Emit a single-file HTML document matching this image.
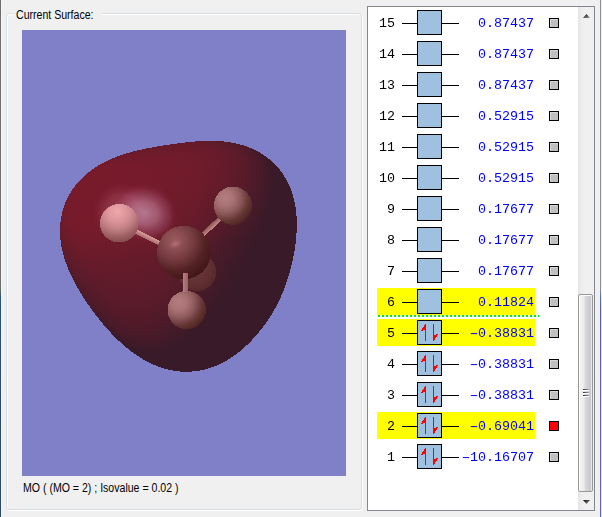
<!DOCTYPE html>
<html><head><meta charset="utf-8"><title>MO Editor</title>
<style>
html,body{margin:0;padding:0}
body{width:602px;height:517px;background:#f0f0f0;position:relative;overflow:hidden;font-family:"Liberation Sans",sans-serif;color:#000}
div,svg,span{position:absolute;box-sizing:border-box}
.edgeL{left:0;top:0;width:1px;height:517px;background:linear-gradient(#6e6e6e 0,#6e6e6e 55%,#607068 56%,#2e5070 57.5%,#2a4a62 100%)}
.edgeL2{left:1px;top:0;width:1px;height:517px;background:#f6f5f3}
.edgeR{left:600px;top:0;width:1px;height:517px;background:linear-gradient(#8c9096 0,#8c9096 56%,#507898 57.5%,#5c5cac 60%,#6666b4 100%)}
.edgeR2{left:601px;top:0;width:1px;height:517px;background:linear-gradient(#f0f0f0 0,#f0f0f0 56%,#d0f4fc 57.5%,#dcdcf8 61%,#e0e0f8 100%)}
.grp{left:6px;top:13px;width:356px;height:497px;border:1px solid #d5dfe5;border-radius:3px;box-shadow:inset 1px 1px 0 #fff,1px 1px 0 #fff}
.grpt{left:14px;top:5px;height:16px;width:88px;background:#f0f0f0}
.t{white-space:pre;font-size:12px;line-height:14px;transform-origin:0 0;transform:scaleX(.88)}
.view{left:22px;top:30px;width:324px;height:446px;background:#8080c8}
.list{left:367px;top:6px;width:228px;height:505px;border:1px solid #828790;background:#fff}
.rows{left:0;top:0;width:602px;height:517px;will-change:transform;font-family:"Liberation Mono",monospace;font-size:13.333px;line-height:16px}
.hl{left:377px;width:158px;height:27px;background:#ff0}
.num{left:371px;width:24px;text-align:right;height:16px}
.ln{left:402px;width:57px;height:1px;background:#000}
.bx{left:417px;width:25px;height:25px;border:1px solid #000;background:#a0c0e0}
.bx svg{left:0;top:0}
.en{left:454px;width:80px;text-align:right;height:16px;color:#00f;white-space:pre}
.m{position:static;display:inline-block;transform:scaleX(1.75)}
.sq{left:549px;width:10px;height:10px;border:1px solid #000;background:#c0c0c0;box-shadow:inset 1px 1px 0 #d8d8d8}
.sq.r{background:#f00;box-shadow:none}
.dots{left:378px;top:315px;width:161px;height:2px;background:repeating-linear-gradient(90deg,#00f000 0,#00f000 2px,#fff 2px,#fff 4px)}
.sb{left:578px;top:7px;width:16px;height:503px;background:linear-gradient(90deg,#e3e3e3 0,#ededed 3px,#f0f0f0 8px,#f0f0f0 100%)}
.thumb{left:578px;top:294px;width:15px;height:198px;border:1px solid #979797;border-radius:2px;background:linear-gradient(90deg,#f4f4f4 0,#ececec 5px,#dadadc 6px,#c8c8ce 11.6px,#ececec 12px,#ececec 100%);box-shadow:inset 1px 1px 0 #fff}
.grip{left:583px;width:6px;height:2px;background:linear-gradient(90deg,#303030,#a0a0a0);border-bottom:1px solid #fff}
</style></head><body>
<div class="edgeL"></div><div class="edgeL2"></div><div class="edgeR"></div><div class="edgeR2"></div>
<div class="grp"></div>
<div class="grpt"></div>
<div class="t" style="left:15.500px;top:8px">Current Surface:</div>
<div class="view">
<svg width="324" height="446" viewBox="22 30 324 446">
<defs>
<radialGradient id="spec" gradientUnits="userSpaceOnUse" cx="0" cy="0" r="1" gradientTransform="translate(145 213) rotate(20) scale(33 29)">
<stop offset="0" stop-color="#dcb0cc" stop-opacity=".6"/><stop offset=".4" stop-color="#d094b0" stop-opacity=".5"/><stop offset=".75" stop-color="#b86488" stop-opacity=".25"/><stop offset="1" stop-color="#902848" stop-opacity="0"/>
</radialGradient>
<radialGradient id="halo" gradientUnits="userSpaceOnUse" cx="122" cy="212" r="30"><stop offset="0" stop-color="#d08098" stop-opacity=".4"/><stop offset=".6" stop-color="#c06080" stop-opacity=".25"/><stop offset="1" stop-color="#902848" stop-opacity="0"/></radialGradient>
<radialGradient id="chl" gradientUnits="userSpaceOnUse" cx="0" cy="0" r="1" gradientTransform="translate(175.500 244) rotate(-20) scale(8 4.500)"><stop offset="0" stop-color="#c07a80" stop-opacity=".8"/><stop offset="1" stop-color="#a06066" stop-opacity="0"/></radialGradient>
<radialGradient id="h1" cx=".45" cy=".2" r=".85"><stop offset="0" stop-color="#f0aaae"/><stop offset=".3" stop-color="#dc969b"/><stop offset=".55" stop-color="#c07f84"/><stop offset=".8" stop-color="#9a5c5e"/><stop offset="1" stop-color="#7e4848"/></radialGradient>
<radialGradient id="h2" cx=".3" cy=".3" r=".8"><stop offset="0" stop-color="#b47e81"/><stop offset=".25" stop-color="#aa7477"/><stop offset=".5" stop-color="#8e5a5c"/><stop offset=".75" stop-color="#643634"/><stop offset="1" stop-color="#4a2220"/></radialGradient>
<radialGradient id="cc" cx=".33" cy=".28" r=".8"><stop offset="0" stop-color="#9a5a5f"/><stop offset=".2" stop-color="#8c4e52"/><stop offset=".45" stop-color="#743a3e"/><stop offset=".7" stop-color="#542224"/><stop offset="1" stop-color="#3e1416"/></radialGradient>
<radialGradient id="h4" cx=".4" cy=".4" r=".8"><stop offset="0" stop-color="#6c3a3c"/><stop offset=".6" stop-color="#5e2e30"/><stop offset="1" stop-color="#4c2226"/></radialGradient>
<linearGradient id="b1" gradientUnits="userSpaceOnUse" x1="0" y1="-2.3" x2="0" y2="2.3"><stop offset="0" stop-color="#dc9c9c"/><stop offset="1" stop-color="#a86c6c"/></linearGradient>
<linearGradient id="b2" gradientUnits="userSpaceOnUse" x1="0" y1="-2.3" x2="0" y2="2.3"><stop offset="0" stop-color="#c88888"/><stop offset="1" stop-color="#8a5454"/></linearGradient>
<linearGradient id="b3v" gradientUnits="userSpaceOnUse" x1="183" y1="0" x2="188" y2="0"><stop offset="0" stop-color="#b88084"/><stop offset="1" stop-color="#986064"/></linearGradient>
<linearGradient id="b3" gradientUnits="userSpaceOnUse" x1="0" y1="-2.3" x2="0" y2="2.3"><stop offset="0" stop-color="#985e60"/><stop offset="1" stop-color="#b47c7e"/></linearGradient>
</defs>
<defs>
<linearGradient id="g0" gradientUnits="userSpaceOnUse" x1="184" y1="0" x2="232" y2="0"><stop offset="0" stop-color="#611b2a"/><stop offset="0.0208" stop-color="#6c1b2a"/><stop offset="0.0833" stop-color="#651b2a"/><stop offset="0.208" stop-color="#601b2a"/><stop offset="0.25" stop-color="#651b2a"/><stop offset="0.417" stop-color="#611b2a"/><stop offset="0.708" stop-color="#5b1b2a"/><stop offset="0.792" stop-color="#561a29"/><stop offset="0.833" stop-color="#5c1b2a"/><stop offset="0.917" stop-color="#5a1b2a"/><stop offset="0.938" stop-color="#581b2a"/><stop offset="0.958" stop-color="#5c1b2a"/><stop offset="1" stop-color="#601b2a"/></linearGradient>
<linearGradient id="g1" gradientUnits="userSpaceOnUse" x1="169" y1="0" x2="241" y2="0"><stop offset="0" stop-color="#631b2a"/><stop offset="0.0139" stop-color="#6d1b2b"/><stop offset="0.0417" stop-color="#661b2a"/><stop offset="0.0833" stop-color="#621b2a"/><stop offset="0.111" stop-color="#681b2a"/><stop offset="0.222" stop-color="#641b2a"/><stop offset="0.444" stop-color="#651b2a"/><stop offset="0.708" stop-color="#5f1b2a"/><stop offset="0.875" stop-color="#551a29"/><stop offset="0.889" stop-color="#531a29"/><stop offset="0.903" stop-color="#4f1a29"/><stop offset="0.917" stop-color="#4e1a29"/><stop offset="0.931" stop-color="#551a29"/><stop offset="0.944" stop-color="#581b2a"/><stop offset="0.958" stop-color="#551a29"/><stop offset="0.986" stop-color="#581b2a"/><stop offset="1" stop-color="#601b2a"/></linearGradient>
<linearGradient id="g2" gradientUnits="userSpaceOnUse" x1="156" y1="0" x2="248" y2="0"><stop offset="0" stop-color="#601b2a"/><stop offset="0.0109" stop-color="#6a1b2a"/><stop offset="0.0217" stop-color="#6b1b2a"/><stop offset="0.0326" stop-color="#671b2a"/><stop offset="0.0543" stop-color="#631b2a"/><stop offset="0.0652" stop-color="#631b2a"/><stop offset="0.0761" stop-color="#681b2a"/><stop offset="0.087" stop-color="#6a1b2a"/><stop offset="0.13" stop-color="#651b2a"/><stop offset="0.359" stop-color="#691b2a"/><stop offset="0.609" stop-color="#651b2a"/><stop offset="0.804" stop-color="#5b1b2a"/><stop offset="0.913" stop-color="#521a29"/><stop offset="0.924" stop-color="#4e1a29"/><stop offset="0.935" stop-color="#471a29"/><stop offset="0.946" stop-color="#4c1a29"/><stop offset="0.957" stop-color="#561a29"/><stop offset="0.967" stop-color="#501a29"/><stop offset="0.978" stop-color="#521a29"/><stop offset="0.989" stop-color="#601b2a"/><stop offset="1" stop-color="#631b2a"/></linearGradient>
<linearGradient id="g3" gradientUnits="userSpaceOnUse" x1="145" y1="0" x2="253" y2="0"><stop offset="0" stop-color="#5f1b2a"/><stop offset="0.0185" stop-color="#6c1b2a"/><stop offset="0.037" stop-color="#651b2a"/><stop offset="0.0463" stop-color="#631b2a"/><stop offset="0.0648" stop-color="#6a1b2a"/><stop offset="0.111" stop-color="#661b2a"/><stop offset="0.231" stop-color="#6a1b2a"/><stop offset="0.481" stop-color="#6a1b2a"/><stop offset="0.694" stop-color="#631b2a"/><stop offset="0.852" stop-color="#581b2a"/><stop offset="0.935" stop-color="#4f1a29"/><stop offset="0.954" stop-color="#441a29"/><stop offset="0.981" stop-color="#521a29"/><stop offset="0.991" stop-color="#601b2a"/><stop offset="1" stop-color="#651b2a"/></linearGradient>
<linearGradient id="g4" gradientUnits="userSpaceOnUse" x1="136" y1="0" x2="257" y2="0"><stop offset="0" stop-color="#601b2a"/><stop offset="0.0165" stop-color="#6c1b2a"/><stop offset="0.0248" stop-color="#671b2a"/><stop offset="0.0331" stop-color="#641b2a"/><stop offset="0.0496" stop-color="#6b1b2a"/><stop offset="0.0826" stop-color="#671b2a"/><stop offset="0.182" stop-color="#6b1b2a"/><stop offset="0.446" stop-color="#6d1b2b"/><stop offset="0.653" stop-color="#671b2a"/><stop offset="0.818" stop-color="#5c1b2a"/><stop offset="0.95" stop-color="#4b1a29"/><stop offset="0.959" stop-color="#441a29"/><stop offset="0.967" stop-color="#431a29"/><stop offset="0.975" stop-color="#481a29"/><stop offset="0.983" stop-color="#521a29"/><stop offset="0.992" stop-color="#561a29"/><stop offset="1" stop-color="#651b2a"/></linearGradient>
<linearGradient id="g5" gradientUnits="userSpaceOnUse" x1="129" y1="0" x2="261" y2="0"><stop offset="0" stop-color="#661b2a"/><stop offset="0.00758" stop-color="#6c1b2a"/><stop offset="0.0227" stop-color="#651b2a"/><stop offset="0.0303" stop-color="#6a1b2a"/><stop offset="0.0379" stop-color="#6d1b2b"/><stop offset="0.0606" stop-color="#681b2a"/><stop offset="0.129" stop-color="#6c1b2a"/><stop offset="0.424" stop-color="#6e1b2b"/><stop offset="0.629" stop-color="#691b2a"/><stop offset="0.788" stop-color="#5e1b2a"/><stop offset="0.902" stop-color="#511a29"/><stop offset="0.955" stop-color="#471a29"/><stop offset="0.962" stop-color="#411a28"/><stop offset="0.97" stop-color="#401a28"/><stop offset="0.977" stop-color="#441a29"/><stop offset="0.985" stop-color="#501a29"/><stop offset="0.992" stop-color="#601b2a"/><stop offset="1" stop-color="#5f1b2a"/></linearGradient>
<linearGradient id="g6" gradientUnits="userSpaceOnUse" x1="122" y1="0" x2="264" y2="0"><stop offset="0" stop-color="#641b2a"/><stop offset="0.00704" stop-color="#6f1b2b"/><stop offset="0.0141" stop-color="#6a1b2a"/><stop offset="0.0211" stop-color="#661b2a"/><stop offset="0.0282" stop-color="#6c1b2a"/><stop offset="0.0352" stop-color="#6e1b2b"/><stop offset="0.0493" stop-color="#6a1b2a"/><stop offset="0.12" stop-color="#6e1b2b"/><stop offset="0.444" stop-color="#6f1b2b"/><stop offset="0.634" stop-color="#6a1b2a"/><stop offset="0.789" stop-color="#5f1b2a"/><stop offset="0.901" stop-color="#501a29"/><stop offset="0.965" stop-color="#441a29"/><stop offset="0.972" stop-color="#3d1a28"/><stop offset="0.979" stop-color="#3d1a28"/><stop offset="0.986" stop-color="#501a29"/><stop offset="0.993" stop-color="#531a29"/><stop offset="1" stop-color="#5f1b2a"/></linearGradient>
<linearGradient id="g7" gradientUnits="userSpaceOnUse" x1="116" y1="0" x2="267" y2="0"><stop offset="0" stop-color="#601b2a"/><stop offset="0.00662" stop-color="#681b2a"/><stop offset="0.0132" stop-color="#6b1b2a"/><stop offset="0.0199" stop-color="#6a1b2a"/><stop offset="0.0265" stop-color="#6d1b2b"/><stop offset="0.0331" stop-color="#6e1b2b"/><stop offset="0.0464" stop-color="#6b1b2a"/><stop offset="0.0927" stop-color="#6f1b2b"/><stop offset="0.411" stop-color="#711b2b"/><stop offset="0.603" stop-color="#6c1b2a"/><stop offset="0.762" stop-color="#611b2a"/><stop offset="0.874" stop-color="#541a29"/><stop offset="0.947" stop-color="#451a29"/><stop offset="0.967" stop-color="#401a28"/><stop offset="0.974" stop-color="#3b1a28"/><stop offset="0.98" stop-color="#3a1a28"/><stop offset="0.987" stop-color="#511a29"/><stop offset="0.993" stop-color="#541a29"/><stop offset="1" stop-color="#5f1b2a"/></linearGradient>
<linearGradient id="g8" gradientUnits="userSpaceOnUse" x1="111" y1="0" x2="269" y2="0"><stop offset="0" stop-color="#601b2a"/><stop offset="0.00633" stop-color="#6a1b2a"/><stop offset="0.0253" stop-color="#6f1b2b"/><stop offset="0.038" stop-color="#6c1b2a"/><stop offset="0.0696" stop-color="#701b2b"/><stop offset="0.234" stop-color="#721b2b"/><stop offset="0.538" stop-color="#6f1b2b"/><stop offset="0.703" stop-color="#671b2a"/><stop offset="0.835" stop-color="#591b2a"/><stop offset="0.924" stop-color="#4a1a29"/><stop offset="0.975" stop-color="#3d1a28"/><stop offset="0.981" stop-color="#391a28"/><stop offset="0.987" stop-color="#391a28"/><stop offset="0.994" stop-color="#4b1a29"/><stop offset="1" stop-color="#661b2a"/></linearGradient>
<linearGradient id="g9" gradientUnits="userSpaceOnUse" x1="107" y1="0" x2="272" y2="0"><stop offset="0" stop-color="#681b2a"/><stop offset="0.00606" stop-color="#6d1b2b"/><stop offset="0.0182" stop-color="#701b2b"/><stop offset="0.0242" stop-color="#701b2b"/><stop offset="0.0303" stop-color="#6d1b2b"/><stop offset="0.0545" stop-color="#711b2b"/><stop offset="0.17" stop-color="#731b2b"/><stop offset="0.539" stop-color="#6f1b2b"/><stop offset="0.697" stop-color="#671b2a"/><stop offset="0.83" stop-color="#591b2a"/><stop offset="0.915" stop-color="#4a1a29"/><stop offset="0.964" stop-color="#3d1a28"/><stop offset="0.976" stop-color="#381a28"/><stop offset="0.982" stop-color="#381a28"/><stop offset="0.994" stop-color="#4f1a29"/><stop offset="1" stop-color="#5f1b2a"/></linearGradient>
<linearGradient id="g10" gradientUnits="userSpaceOnUse" x1="103" y1="0" x2="274" y2="0"><stop offset="0" stop-color="#681b2a"/><stop offset="0.0117" stop-color="#701b2b"/><stop offset="0.0292" stop-color="#701b2b"/><stop offset="0.076" stop-color="#741b2b"/><stop offset="0.287" stop-color="#731b2b"/><stop offset="0.556" stop-color="#6f1b2b"/><stop offset="0.713" stop-color="#661b2a"/><stop offset="0.836" stop-color="#571a29"/><stop offset="0.918" stop-color="#481a29"/><stop offset="0.965" stop-color="#3b1a28"/><stop offset="0.977" stop-color="#381a28"/><stop offset="0.988" stop-color="#381a28"/><stop offset="1" stop-color="#5f1b2a"/></linearGradient>
<linearGradient id="g11" gradientUnits="userSpaceOnUse" x1="99" y1="0" x2="276" y2="0"><stop offset="0" stop-color="#671b2a"/><stop offset="0.00565" stop-color="#6f1b2b"/><stop offset="0.0113" stop-color="#721b2b"/><stop offset="0.0282" stop-color="#711b2b"/><stop offset="0.0678" stop-color="#751b2b"/><stop offset="0.209" stop-color="#751b2b"/><stop offset="0.559" stop-color="#6f1b2b"/><stop offset="0.712" stop-color="#661b2a"/><stop offset="0.836" stop-color="#571a29"/><stop offset="0.915" stop-color="#481a29"/><stop offset="0.966" stop-color="#391a28"/><stop offset="0.989" stop-color="#381a28"/><stop offset="1" stop-color="#5f1b2a"/></linearGradient>
<linearGradient id="g12" gradientUnits="userSpaceOnUse" x1="96" y1="0" x2="278" y2="0"><stop offset="0" stop-color="#691b2a"/><stop offset="0.00549" stop-color="#6c1b2a"/><stop offset="0.011" stop-color="#711b2b"/><stop offset="0.0659" stop-color="#771b2b"/><stop offset="0.242" stop-color="#751b2b"/><stop offset="0.566" stop-color="#6f1b2b"/><stop offset="0.714" stop-color="#651b2a"/><stop offset="0.835" stop-color="#561a29"/><stop offset="0.918" stop-color="#461a29"/><stop offset="0.962" stop-color="#381a28"/><stop offset="0.989" stop-color="#381a28"/><stop offset="1" stop-color="#5f1b2a"/></linearGradient>
<linearGradient id="g13" gradientUnits="userSpaceOnUse" x1="93" y1="0" x2="280" y2="0"><stop offset="0" stop-color="#6a1b2a"/><stop offset="0.00535" stop-color="#711b2b"/><stop offset="0.0535" stop-color="#771b2b"/><stop offset="0.257" stop-color="#761b2b"/><stop offset="0.567" stop-color="#6f1b2b"/><stop offset="0.711" stop-color="#651b2a"/><stop offset="0.834" stop-color="#551a29"/><stop offset="0.914" stop-color="#451a29"/><stop offset="0.957" stop-color="#381a28"/><stop offset="0.989" stop-color="#381a28"/><stop offset="1" stop-color="#5f1b2a"/></linearGradient>
<linearGradient id="g14" gradientUnits="userSpaceOnUse" x1="90" y1="0" x2="281" y2="0"><stop offset="0" stop-color="#6a1b2a"/><stop offset="0.00524" stop-color="#711b2b"/><stop offset="0.0366" stop-color="#771b2b"/><stop offset="0.272" stop-color="#761b2b"/><stop offset="0.571" stop-color="#6f1b2b"/><stop offset="0.712" stop-color="#651b2a"/><stop offset="0.832" stop-color="#551a29"/><stop offset="0.911" stop-color="#461a29"/><stop offset="0.958" stop-color="#381a28"/><stop offset="0.99" stop-color="#381a28"/><stop offset="1" stop-color="#5f1b2a"/></linearGradient>
<linearGradient id="g15" gradientUnits="userSpaceOnUse" x1="87" y1="0" x2="283" y2="0"><stop offset="0" stop-color="#681b2a"/><stop offset="0.0051" stop-color="#711b2b"/><stop offset="0.0102" stop-color="#741b2b"/><stop offset="0.0459" stop-color="#771b2b"/><stop offset="0.286" stop-color="#761b2b"/><stop offset="0.571" stop-color="#6f1b2b"/><stop offset="0.714" stop-color="#641b2a"/><stop offset="0.837" stop-color="#531a29"/><stop offset="0.913" stop-color="#431a29"/><stop offset="0.949" stop-color="#381a28"/><stop offset="0.99" stop-color="#381a28"/><stop offset="1" stop-color="#5f1b2a"/></linearGradient>
<linearGradient id="g16" gradientUnits="userSpaceOnUse" x1="85" y1="0" x2="284" y2="0"><stop offset="0" stop-color="#6b1b2a"/><stop offset="0.00503" stop-color="#751b2b"/><stop offset="0.0151" stop-color="#741b2b"/><stop offset="0.0302" stop-color="#771b2b"/><stop offset="0.291" stop-color="#761b2b"/><stop offset="0.578" stop-color="#6e1b2b"/><stop offset="0.719" stop-color="#631b2a"/><stop offset="0.839" stop-color="#521a29"/><stop offset="0.915" stop-color="#421a28"/><stop offset="0.95" stop-color="#381a28"/><stop offset="0.99" stop-color="#381a28"/><stop offset="1" stop-color="#5f1b2a"/></linearGradient>
<linearGradient id="g17" gradientUnits="userSpaceOnUse" x1="83" y1="0" x2="285" y2="0"><stop offset="0" stop-color="#6a1b2a"/><stop offset="0.00495" stop-color="#751b2b"/><stop offset="0.0396" stop-color="#771b2b"/><stop offset="0.302" stop-color="#761b2b"/><stop offset="0.574" stop-color="#6f1b2b"/><stop offset="0.713" stop-color="#631b2a"/><stop offset="0.837" stop-color="#521a29"/><stop offset="0.916" stop-color="#411a28"/><stop offset="0.946" stop-color="#381a28"/><stop offset="0.995" stop-color="#381a28"/><stop offset="1" stop-color="#5f1b2a"/></linearGradient>
<linearGradient id="g18" gradientUnits="userSpaceOnUse" x1="81" y1="0" x2="287" y2="0"><stop offset="0" stop-color="#6a1b2a"/><stop offset="0.00485" stop-color="#751b2b"/><stop offset="0.0291" stop-color="#771b2b"/><stop offset="0.301" stop-color="#761b2b"/><stop offset="0.573" stop-color="#6e1b2b"/><stop offset="0.709" stop-color="#631b2a"/><stop offset="0.83" stop-color="#521a29"/><stop offset="0.908" stop-color="#411a28"/><stop offset="0.937" stop-color="#381a28"/><stop offset="0.99" stop-color="#381a28"/><stop offset="1" stop-color="#5f1b2a"/></linearGradient>
<linearGradient id="g19" gradientUnits="userSpaceOnUse" x1="79" y1="0" x2="288" y2="0"><stop offset="0" stop-color="#6a1b2a"/><stop offset="0.00478" stop-color="#751b2b"/><stop offset="0.0287" stop-color="#771b2b"/><stop offset="0.306" stop-color="#761b2b"/><stop offset="0.574" stop-color="#6e1b2b"/><stop offset="0.708" stop-color="#621b2a"/><stop offset="0.833" stop-color="#511a29"/><stop offset="0.909" stop-color="#401a28"/><stop offset="0.933" stop-color="#381a28"/><stop offset="0.99" stop-color="#381a28"/><stop offset="1" stop-color="#5f1b2a"/></linearGradient>
<linearGradient id="g20" gradientUnits="userSpaceOnUse" x1="77" y1="0" x2="289" y2="0"><stop offset="0" stop-color="#6b1b2a"/><stop offset="0.00472" stop-color="#751b2b"/><stop offset="0.0377" stop-color="#771b2b"/><stop offset="0.311" stop-color="#761b2b"/><stop offset="0.575" stop-color="#6e1b2b"/><stop offset="0.712" stop-color="#611b2a"/><stop offset="0.835" stop-color="#4f1a29"/><stop offset="0.91" stop-color="#3e1a28"/><stop offset="0.934" stop-color="#381a28"/><stop offset="0.991" stop-color="#381a28"/><stop offset="1" stop-color="#5f1b2a"/></linearGradient>
<linearGradient id="g21" gradientUnits="userSpaceOnUse" x1="75" y1="0" x2="290" y2="0"><stop offset="0" stop-color="#691b2a"/><stop offset="0.00465" stop-color="#761b2b"/><stop offset="0.0093" stop-color="#751b2b"/><stop offset="0.0233" stop-color="#771b2b"/><stop offset="0.312" stop-color="#761b2b"/><stop offset="0.577" stop-color="#6d1b2b"/><stop offset="0.712" stop-color="#611b2a"/><stop offset="0.833" stop-color="#4f1a29"/><stop offset="0.907" stop-color="#3e1a28"/><stop offset="0.93" stop-color="#381a28"/><stop offset="0.991" stop-color="#381a28"/><stop offset="1" stop-color="#5f1b2a"/></linearGradient>
<linearGradient id="g22" gradientUnits="userSpaceOnUse" x1="74" y1="0" x2="291" y2="0"><stop offset="0" stop-color="#6e1b2b"/><stop offset="0.00461" stop-color="#751b2b"/><stop offset="0.0184" stop-color="#771b2b"/><stop offset="0.313" stop-color="#761b2b"/><stop offset="0.576" stop-color="#6d1b2b"/><stop offset="0.71" stop-color="#601b2a"/><stop offset="0.834" stop-color="#4d1a29"/><stop offset="0.926" stop-color="#381a28"/><stop offset="0.991" stop-color="#381a28"/><stop offset="1" stop-color="#5f1b2a"/></linearGradient>
<linearGradient id="g23" gradientUnits="userSpaceOnUse" x1="72" y1="0" x2="292" y2="0"><stop offset="0" stop-color="#671b2a"/><stop offset="0.00455" stop-color="#761b2b"/><stop offset="0.00909" stop-color="#741b2b"/><stop offset="0.0182" stop-color="#771b2b"/><stop offset="0.314" stop-color="#761b2b"/><stop offset="0.577" stop-color="#6d1b2b"/><stop offset="0.714" stop-color="#5f1b2a"/><stop offset="0.836" stop-color="#4c1a29"/><stop offset="0.923" stop-color="#381a28"/><stop offset="0.991" stop-color="#381a28"/><stop offset="0.995" stop-color="#5f1b2a"/><stop offset="1" stop-color="#5f1b2a"/></linearGradient>
<linearGradient id="g24" gradientUnits="userSpaceOnUse" x1="71" y1="0" x2="292" y2="0"><stop offset="0" stop-color="#6b1b2a"/><stop offset="0.00452" stop-color="#751b2b"/><stop offset="0.0226" stop-color="#771b2b"/><stop offset="0.312" stop-color="#761b2b"/><stop offset="0.579" stop-color="#6c1b2a"/><stop offset="0.715" stop-color="#5e1b2a"/><stop offset="0.837" stop-color="#4c1a29"/><stop offset="0.91" stop-color="#3b1a28"/><stop offset="0.923" stop-color="#381a28"/><stop offset="0.995" stop-color="#381a28"/><stop offset="1" stop-color="#5f1b2a"/></linearGradient>
<linearGradient id="g25" gradientUnits="userSpaceOnUse" x1="70" y1="0" x2="293" y2="0"><stop offset="0" stop-color="#721b2b"/><stop offset="0.0135" stop-color="#771b2b"/><stop offset="0.309" stop-color="#761b2b"/><stop offset="0.574" stop-color="#6c1b2a"/><stop offset="0.709" stop-color="#5e1b2a"/><stop offset="0.834" stop-color="#4b1a29"/><stop offset="0.915" stop-color="#381a28"/><stop offset="0.996" stop-color="#381a28"/><stop offset="1" stop-color="#5f1b2a"/></linearGradient>
<linearGradient id="g26" gradientUnits="userSpaceOnUse" x1="68" y1="0" x2="294" y2="0"><stop offset="0" stop-color="#691b2a"/><stop offset="0.00442" stop-color="#731b2b"/><stop offset="0.0221" stop-color="#771b2b"/><stop offset="0.314" stop-color="#761b2b"/><stop offset="0.575" stop-color="#6c1b2a"/><stop offset="0.712" stop-color="#5d1b2a"/><stop offset="0.836" stop-color="#491a29"/><stop offset="0.912" stop-color="#381a28"/><stop offset="0.991" stop-color="#381a28"/><stop offset="0.996" stop-color="#4d1a29"/><stop offset="1" stop-color="#5f1b2a"/></linearGradient>
<linearGradient id="g27" gradientUnits="userSpaceOnUse" x1="67" y1="0" x2="294" y2="0"><stop offset="0" stop-color="#681b2a"/><stop offset="0.00441" stop-color="#751b2b"/><stop offset="0.00881" stop-color="#741b2b"/><stop offset="0.0176" stop-color="#771b2b"/><stop offset="0.313" stop-color="#761b2b"/><stop offset="0.577" stop-color="#6c1b2a"/><stop offset="0.714" stop-color="#5d1b2a"/><stop offset="0.837" stop-color="#491a29"/><stop offset="0.912" stop-color="#381a28"/><stop offset="0.996" stop-color="#381a28"/><stop offset="1" stop-color="#5f1b2a"/></linearGradient>
<linearGradient id="g28" gradientUnits="userSpaceOnUse" x1="66" y1="0" x2="295" y2="0"><stop offset="0" stop-color="#681b2a"/><stop offset="0.00437" stop-color="#741b2b"/><stop offset="0.00873" stop-color="#731b2b"/><stop offset="0.0175" stop-color="#771b2b"/><stop offset="0.31" stop-color="#761b2b"/><stop offset="0.572" stop-color="#6b1b2a"/><stop offset="0.707" stop-color="#5c1b2a"/><stop offset="0.834" stop-color="#481a29"/><stop offset="0.904" stop-color="#381a28"/><stop offset="0.991" stop-color="#381a28"/><stop offset="1" stop-color="#5f1b2a"/></linearGradient>
<linearGradient id="g29" gradientUnits="userSpaceOnUse" x1="65" y1="0" x2="295" y2="0"><stop offset="0" stop-color="#691b2a"/><stop offset="0.00435" stop-color="#731b2b"/><stop offset="0.0087" stop-color="#721b2b"/><stop offset="0.0174" stop-color="#771b2b"/><stop offset="0.309" stop-color="#761b2b"/><stop offset="0.574" stop-color="#6b1b2a"/><stop offset="0.713" stop-color="#5b1b2a"/><stop offset="0.839" stop-color="#471a29"/><stop offset="0.904" stop-color="#381a28"/><stop offset="0.996" stop-color="#381a28"/><stop offset="1" stop-color="#5f1b2a"/></linearGradient>
<linearGradient id="g30" gradientUnits="userSpaceOnUse" x1="64" y1="0" x2="296" y2="0"><stop offset="0" stop-color="#5f1b2a"/><stop offset="0.00431" stop-color="#6f1b2b"/><stop offset="0.0172" stop-color="#761b2b"/><stop offset="0.306" stop-color="#761b2b"/><stop offset="0.573" stop-color="#6b1b2a"/><stop offset="0.716" stop-color="#5a1b2a"/><stop offset="0.841" stop-color="#451a29"/><stop offset="0.901" stop-color="#381a28"/><stop offset="0.991" stop-color="#381a28"/><stop offset="1" stop-color="#5f1b2a"/></linearGradient>
<linearGradient id="g31" gradientUnits="userSpaceOnUse" x1="64" y1="0" x2="296" y2="0"><stop offset="0" stop-color="#6f1b2b"/><stop offset="0.00431" stop-color="#731b2b"/><stop offset="0.00862" stop-color="#731b2b"/><stop offset="0.0172" stop-color="#771b2b"/><stop offset="0.302" stop-color="#761b2b"/><stop offset="0.569" stop-color="#6a1b2a"/><stop offset="0.716" stop-color="#591b2a"/><stop offset="0.841" stop-color="#441a29"/><stop offset="0.897" stop-color="#381a28"/><stop offset="0.996" stop-color="#381a28"/><stop offset="1" stop-color="#5f1b2a"/></linearGradient>
<linearGradient id="g32" gradientUnits="userSpaceOnUse" x1="63" y1="0" x2="296" y2="0"><stop offset="0" stop-color="#6e1b2b"/><stop offset="0.00429" stop-color="#741b2b"/><stop offset="0.00858" stop-color="#711b2b"/><stop offset="0.0172" stop-color="#761b2b"/><stop offset="0.18" stop-color="#771b2b"/><stop offset="0.305" stop-color="#761b2b"/><stop offset="0.571" stop-color="#6a1b2a"/><stop offset="0.721" stop-color="#581b2a"/><stop offset="0.845" stop-color="#431a29"/><stop offset="0.897" stop-color="#381a28"/><stop offset="0.996" stop-color="#381a28"/><stop offset="1" stop-color="#5f1b2a"/></linearGradient>
<linearGradient id="g33" gradientUnits="userSpaceOnUse" x1="62" y1="0" x2="297" y2="0"><stop offset="0" stop-color="#681b2a"/><stop offset="0.00426" stop-color="#731b2b"/><stop offset="0.00851" stop-color="#6f1b2b"/><stop offset="0.0213" stop-color="#761b2b"/><stop offset="0.298" stop-color="#761b2b"/><stop offset="0.566" stop-color="#6a1b2a"/><stop offset="0.719" stop-color="#571a29"/><stop offset="0.843" stop-color="#421a28"/><stop offset="0.889" stop-color="#381a28"/><stop offset="0.991" stop-color="#381a28"/><stop offset="1" stop-color="#5f1b2a"/></linearGradient>
<linearGradient id="g34" gradientUnits="userSpaceOnUse" x1="62" y1="0" x2="297" y2="0"><stop offset="0" stop-color="#6a1b2a"/><stop offset="0.00426" stop-color="#711b2b"/><stop offset="0.00851" stop-color="#711b2b"/><stop offset="0.0213" stop-color="#761b2b"/><stop offset="0.294" stop-color="#761b2b"/><stop offset="0.566" stop-color="#691b2a"/><stop offset="0.732" stop-color="#541a29"/><stop offset="0.851" stop-color="#3f1a28"/><stop offset="0.885" stop-color="#381a28"/><stop offset="0.996" stop-color="#381a28"/><stop offset="1" stop-color="#5f1b2a"/></linearGradient>
<linearGradient id="g35" gradientUnits="userSpaceOnUse" x1="61" y1="0" x2="297" y2="0"><stop offset="0" stop-color="#661b2a"/><stop offset="0.00424" stop-color="#741b2b"/><stop offset="0.00847" stop-color="#6e1b2b"/><stop offset="0.0169" stop-color="#741b2b"/><stop offset="0.0297" stop-color="#771b2b"/><stop offset="0.292" stop-color="#761b2b"/><stop offset="0.564" stop-color="#691b2a"/><stop offset="0.733" stop-color="#531a29"/><stop offset="0.852" stop-color="#3f1a28"/><stop offset="0.886" stop-color="#381a28"/><stop offset="0.996" stop-color="#381a28"/><stop offset="1" stop-color="#5f1b2a"/></linearGradient>
<linearGradient id="g36" gradientUnits="userSpaceOnUse" x1="61" y1="0" x2="297" y2="0"><stop offset="0" stop-color="#691b2a"/><stop offset="0.00424" stop-color="#6f1b2b"/><stop offset="0.0297" stop-color="#771b2b"/><stop offset="0.284" stop-color="#761b2b"/><stop offset="0.564" stop-color="#691b2a"/><stop offset="0.75" stop-color="#501a29"/><stop offset="0.86" stop-color="#3c1a28"/><stop offset="0.881" stop-color="#381a28"/><stop offset="0.996" stop-color="#381a28"/><stop offset="1" stop-color="#5f1b2a"/></linearGradient>
<linearGradient id="g37" gradientUnits="userSpaceOnUse" x1="60" y1="0" x2="298" y2="0"><stop offset="0" stop-color="#681b2a"/><stop offset="0.0042" stop-color="#721b2b"/><stop offset="0.0084" stop-color="#6c1b2a"/><stop offset="0.0168" stop-color="#721b2b"/><stop offset="0.0378" stop-color="#771b2b"/><stop offset="0.282" stop-color="#761b2b"/><stop offset="0.559" stop-color="#691b2a"/><stop offset="0.756" stop-color="#4e1a29"/><stop offset="0.874" stop-color="#381a28"/><stop offset="0.992" stop-color="#381a28"/><stop offset="0.996" stop-color="#5f1b2a"/><stop offset="1" stop-color="#5f1b2a"/></linearGradient>
<linearGradient id="g38" gradientUnits="userSpaceOnUse" x1="60" y1="0" x2="298" y2="0"><stop offset="0" stop-color="#6b1b2a"/><stop offset="0.0042" stop-color="#6f1b2b"/><stop offset="0.0084" stop-color="#6d1b2b"/><stop offset="0.021" stop-color="#731b2b"/><stop offset="0.042" stop-color="#771b2b"/><stop offset="0.273" stop-color="#761b2b"/><stop offset="0.555" stop-color="#681b2a"/><stop offset="0.769" stop-color="#4b1a29"/><stop offset="0.874" stop-color="#381a28"/><stop offset="0.996" stop-color="#381a28"/><stop offset="1" stop-color="#5f1b2a"/></linearGradient>
<linearGradient id="g39" gradientUnits="userSpaceOnUse" x1="60" y1="0" x2="298" y2="0"><stop offset="0" stop-color="#681b2a"/><stop offset="0.0168" stop-color="#711b2b"/><stop offset="0.042" stop-color="#771b2b"/><stop offset="0.261" stop-color="#761b2b"/><stop offset="0.55" stop-color="#681b2a"/><stop offset="0.782" stop-color="#481a29"/><stop offset="0.87" stop-color="#381a28"/><stop offset="0.996" stop-color="#381a28"/><stop offset="1" stop-color="#5f1b2a"/></linearGradient>
<linearGradient id="g40" gradientUnits="userSpaceOnUse" x1="59" y1="0" x2="298" y2="0"><stop offset="0" stop-color="#641b2a"/><stop offset="0.00418" stop-color="#6c1b2a"/><stop offset="0.00837" stop-color="#691b2a"/><stop offset="0.0167" stop-color="#6f1b2b"/><stop offset="0.0418" stop-color="#761b2b"/><stop offset="0.0921" stop-color="#771b2b"/><stop offset="0.259" stop-color="#761b2b"/><stop offset="0.552" stop-color="#681b2a"/><stop offset="0.803" stop-color="#441a29"/><stop offset="0.866" stop-color="#381a28"/><stop offset="0.996" stop-color="#381a28"/><stop offset="1" stop-color="#5f1b2a"/></linearGradient>
<linearGradient id="g41" gradientUnits="userSpaceOnUse" x1="59" y1="0" x2="298" y2="0"><stop offset="0" stop-color="#701b2b"/><stop offset="0.00418" stop-color="#6f1b2b"/><stop offset="0.00837" stop-color="#691b2a"/><stop offset="0.0167" stop-color="#6f1b2b"/><stop offset="0.046" stop-color="#761b2b"/><stop offset="0.0962" stop-color="#771b2b"/><stop offset="0.251" stop-color="#751b2b"/><stop offset="0.548" stop-color="#681b2a"/><stop offset="0.812" stop-color="#411a28"/><stop offset="0.862" stop-color="#381a28"/><stop offset="0.996" stop-color="#381a28"/><stop offset="1" stop-color="#5f1b2a"/></linearGradient>
<linearGradient id="g42" gradientUnits="userSpaceOnUse" x1="59" y1="0" x2="298" y2="0"><stop offset="0" stop-color="#6c1b2a"/><stop offset="0.00837" stop-color="#691b2a"/><stop offset="0.0209" stop-color="#701b2b"/><stop offset="0.0544" stop-color="#761b2b"/><stop offset="0.146" stop-color="#771b2b"/><stop offset="0.356" stop-color="#711b2b"/><stop offset="0.548" stop-color="#671b2a"/><stop offset="0.816" stop-color="#401a28"/><stop offset="0.858" stop-color="#381a28"/><stop offset="0.996" stop-color="#381a28"/><stop offset="1" stop-color="#5f1b2a"/></linearGradient>
<linearGradient id="g43" gradientUnits="userSpaceOnUse" x1="59" y1="0" x2="298" y2="0"><stop offset="0" stop-color="#6b1b2a"/><stop offset="0.00418" stop-color="#681b2a"/><stop offset="0.00837" stop-color="#691b2a"/><stop offset="0.0251" stop-color="#701b2b"/><stop offset="0.0669" stop-color="#761b2b"/><stop offset="0.18" stop-color="#761b2b"/><stop offset="0.418" stop-color="#6d1b2b"/><stop offset="0.544" stop-color="#671b2a"/><stop offset="0.82" stop-color="#3e1a28"/><stop offset="0.858" stop-color="#381a28"/><stop offset="0.996" stop-color="#381a28"/><stop offset="1" stop-color="#5f1b2a"/></linearGradient>
<linearGradient id="g44" gradientUnits="userSpaceOnUse" x1="59" y1="0" x2="298" y2="0"><stop offset="0" stop-color="#6a1b2a"/><stop offset="0.00418" stop-color="#671b2a"/><stop offset="0.0293" stop-color="#701b2b"/><stop offset="0.0753" stop-color="#751b2b"/><stop offset="0.197" stop-color="#751b2b"/><stop offset="0.427" stop-color="#6d1b2b"/><stop offset="0.544" stop-color="#661b2a"/><stop offset="0.824" stop-color="#3d1a28"/><stop offset="0.854" stop-color="#381a28"/><stop offset="0.996" stop-color="#381a28"/><stop offset="1" stop-color="#5f1b2a"/></linearGradient>
<linearGradient id="g45" gradientUnits="userSpaceOnUse" x1="59" y1="0" x2="298" y2="0"><stop offset="0" stop-color="#6a1b2a"/><stop offset="0.00418" stop-color="#651b2a"/><stop offset="0.0251" stop-color="#6e1b2b"/><stop offset="0.0669" stop-color="#741b2b"/><stop offset="0.167" stop-color="#751b2b"/><stop offset="0.414" stop-color="#6d1b2b"/><stop offset="0.54" stop-color="#661b2a"/><stop offset="0.849" stop-color="#381a28"/><stop offset="0.992" stop-color="#381a28"/><stop offset="0.996" stop-color="#4a1a29"/><stop offset="1" stop-color="#5f1b2a"/></linearGradient>
<linearGradient id="g46" gradientUnits="userSpaceOnUse" x1="59" y1="0" x2="297" y2="0"><stop offset="0" stop-color="#6b1b2a"/><stop offset="0.0042" stop-color="#641b2a"/><stop offset="0.0252" stop-color="#6d1b2b"/><stop offset="0.0672" stop-color="#731b2b"/><stop offset="0.168" stop-color="#741b2b"/><stop offset="0.42" stop-color="#6d1b2b"/><stop offset="0.542" stop-color="#651b2a"/><stop offset="0.849" stop-color="#381a28"/><stop offset="0.996" stop-color="#381a28"/><stop offset="1" stop-color="#5f1b2a"/></linearGradient>
<linearGradient id="g47" gradientUnits="userSpaceOnUse" x1="59" y1="0" x2="297" y2="0"><stop offset="0" stop-color="#6c1b2a"/><stop offset="0.0042" stop-color="#611b2a"/><stop offset="0.0168" stop-color="#691b2a"/><stop offset="0.0462" stop-color="#701b2b"/><stop offset="0.109" stop-color="#741b2b"/><stop offset="0.332" stop-color="#701b2b"/><stop offset="0.534" stop-color="#661b2a"/><stop offset="0.845" stop-color="#381a28"/><stop offset="0.996" stop-color="#381a28"/><stop offset="1" stop-color="#5f1b2a"/></linearGradient>
<linearGradient id="g48" gradientUnits="userSpaceOnUse" x1="59" y1="0" x2="297" y2="0"><stop offset="0" stop-color="#711b2b"/><stop offset="0.0042" stop-color="#5a1b2a"/><stop offset="0.0084" stop-color="#631b2a"/><stop offset="0.0252" stop-color="#6b1b2a"/><stop offset="0.063" stop-color="#711b2b"/><stop offset="0.151" stop-color="#731b2b"/><stop offset="0.42" stop-color="#6c1b2a"/><stop offset="0.534" stop-color="#651b2a"/><stop offset="0.676" stop-color="#4f1a29"/><stop offset="0.84" stop-color="#381a28"/><stop offset="0.996" stop-color="#381a28"/><stop offset="1" stop-color="#5f1b2a"/></linearGradient>
<linearGradient id="g49" gradientUnits="userSpaceOnUse" x1="59" y1="0" x2="297" y2="0"><stop offset="0" stop-color="#5f1b2a"/><stop offset="0.0042" stop-color="#631b2a"/><stop offset="0.0084" stop-color="#621b2a"/><stop offset="0.0252" stop-color="#691b2a"/><stop offset="0.063" stop-color="#701b2b"/><stop offset="0.151" stop-color="#721b2b"/><stop offset="0.424" stop-color="#6b1b2a"/><stop offset="0.529" stop-color="#641b2a"/><stop offset="0.651" stop-color="#511a29"/><stop offset="0.84" stop-color="#381a28"/><stop offset="0.996" stop-color="#381a28"/><stop offset="1" stop-color="#5f1b2a"/></linearGradient>
<linearGradient id="g50" gradientUnits="userSpaceOnUse" x1="60" y1="0" x2="297" y2="0"><stop offset="0" stop-color="#681b2a"/><stop offset="0.00422" stop-color="#601b2a"/><stop offset="0.0211" stop-color="#681b2a"/><stop offset="0.0591" stop-color="#6e1b2b"/><stop offset="0.143" stop-color="#711b2b"/><stop offset="0.426" stop-color="#6b1b2a"/><stop offset="0.527" stop-color="#641b2a"/><stop offset="0.629" stop-color="#531a29"/><stop offset="0.835" stop-color="#381a28"/><stop offset="0.996" stop-color="#381a28"/><stop offset="1" stop-color="#5f1b2a"/></linearGradient>
<linearGradient id="g51" gradientUnits="userSpaceOnUse" x1="60" y1="0" x2="297" y2="0"><stop offset="0" stop-color="#6b1b2a"/><stop offset="0.00422" stop-color="#5b1b2a"/><stop offset="0.00844" stop-color="#611b2a"/><stop offset="0.0295" stop-color="#691b2a"/><stop offset="0.0759" stop-color="#6f1b2b"/><stop offset="0.186" stop-color="#701b2b"/><stop offset="0.451" stop-color="#691b2a"/><stop offset="0.523" stop-color="#631b2a"/><stop offset="0.612" stop-color="#541a29"/><stop offset="0.831" stop-color="#381a28"/><stop offset="0.992" stop-color="#381a28"/><stop offset="0.996" stop-color="#5f1b2a"/><stop offset="1" stop-color="#5f1b2a"/></linearGradient>
<linearGradient id="g52" gradientUnits="userSpaceOnUse" x1="60" y1="0" x2="296" y2="0"><stop offset="0" stop-color="#671b2a"/><stop offset="0.00424" stop-color="#541a29"/><stop offset="0.00847" stop-color="#601b2a"/><stop offset="0.0339" stop-color="#681b2a"/><stop offset="0.0847" stop-color="#6e1b2b"/><stop offset="0.212" stop-color="#6f1b2b"/><stop offset="0.466" stop-color="#671b2a"/><stop offset="0.525" stop-color="#621b2a"/><stop offset="0.597" stop-color="#551a29"/><stop offset="0.831" stop-color="#381a28"/><stop offset="0.996" stop-color="#381a28"/><stop offset="1" stop-color="#5f1b2a"/></linearGradient>
<linearGradient id="g53" gradientUnits="userSpaceOnUse" x1="61" y1="0" x2="296" y2="0"><stop offset="0" stop-color="#681b2a"/><stop offset="0.00426" stop-color="#5c1b2a"/><stop offset="0.0128" stop-color="#621b2a"/><stop offset="0.0426" stop-color="#691b2a"/><stop offset="0.106" stop-color="#6e1b2b"/><stop offset="0.289" stop-color="#6c1b2a"/><stop offset="0.477" stop-color="#661b2a"/><stop offset="0.519" stop-color="#621b2a"/><stop offset="0.579" stop-color="#561a29"/><stop offset="0.826" stop-color="#381a28"/><stop offset="0.996" stop-color="#381a28"/><stop offset="1" stop-color="#5f1b2a"/></linearGradient>
<linearGradient id="g54" gradientUnits="userSpaceOnUse" x1="61" y1="0" x2="296" y2="0"><stop offset="0" stop-color="#6d1b2b"/><stop offset="0.00426" stop-color="#511a29"/><stop offset="0.00851" stop-color="#5e1b2a"/><stop offset="0.034" stop-color="#661b2a"/><stop offset="0.0851" stop-color="#6c1b2a"/><stop offset="0.209" stop-color="#6d1b2b"/><stop offset="0.472" stop-color="#661b2a"/><stop offset="0.515" stop-color="#611b2a"/><stop offset="0.562" stop-color="#571a29"/><stop offset="0.821" stop-color="#381a28"/><stop offset="0.991" stop-color="#381a28"/><stop offset="1" stop-color="#5f1b2a"/></linearGradient>
<linearGradient id="g55" gradientUnits="userSpaceOnUse" x1="62" y1="0" x2="295" y2="0"><stop offset="0" stop-color="#601b2a"/><stop offset="0.00429" stop-color="#5b1b2a"/><stop offset="0.0215" stop-color="#631b2a"/><stop offset="0.0601" stop-color="#691b2a"/><stop offset="0.146" stop-color="#6d1b2b"/><stop offset="0.408" stop-color="#671b2a"/><stop offset="0.502" stop-color="#621b2a"/><stop offset="0.549" stop-color="#581b2a"/><stop offset="0.79" stop-color="#3c1a28"/><stop offset="0.824" stop-color="#381a28"/><stop offset="0.996" stop-color="#381a28"/><stop offset="1" stop-color="#5f1b2a"/></linearGradient>
<linearGradient id="g56" gradientUnits="userSpaceOnUse" x1="62" y1="0" x2="295" y2="0"><stop offset="0" stop-color="#6d1b2b"/><stop offset="0.00429" stop-color="#4f1a29"/><stop offset="0.00858" stop-color="#5c1b2a"/><stop offset="0.0386" stop-color="#651b2a"/><stop offset="0.0944" stop-color="#6b1b2a"/><stop offset="0.232" stop-color="#6b1b2a"/><stop offset="0.472" stop-color="#631b2a"/><stop offset="0.506" stop-color="#5f1b2a"/><stop offset="0.532" stop-color="#591b2a"/><stop offset="0.79" stop-color="#3b1a28"/><stop offset="0.82" stop-color="#381a28"/><stop offset="0.996" stop-color="#381a28"/><stop offset="1" stop-color="#5f1b2a"/></linearGradient>
<linearGradient id="g57" gradientUnits="userSpaceOnUse" x1="63" y1="0" x2="295" y2="0"><stop offset="0" stop-color="#601b2a"/><stop offset="0.00431" stop-color="#581b2a"/><stop offset="0.0129" stop-color="#5d1b2a"/><stop offset="0.0431" stop-color="#651b2a"/><stop offset="0.108" stop-color="#6a1b2a"/><stop offset="0.272" stop-color="#691b2a"/><stop offset="0.47" stop-color="#621b2a"/><stop offset="0.5" stop-color="#5f1b2a"/><stop offset="0.522" stop-color="#591b2a"/><stop offset="0.815" stop-color="#381a28"/><stop offset="0.991" stop-color="#381a28"/><stop offset="1" stop-color="#5f1b2a"/></linearGradient>
<linearGradient id="g58" gradientUnits="userSpaceOnUse" x1="63" y1="0" x2="294" y2="0"><stop offset="0" stop-color="#651b2a"/><stop offset="0.00433" stop-color="#4c1a29"/><stop offset="0.00866" stop-color="#5a1b2a"/><stop offset="0.0433" stop-color="#641b2a"/><stop offset="0.104" stop-color="#691b2a"/><stop offset="0.255" stop-color="#691b2a"/><stop offset="0.463" stop-color="#621b2a"/><stop offset="0.498" stop-color="#5e1b2a"/><stop offset="0.528" stop-color="#581b2a"/><stop offset="0.814" stop-color="#381a28"/><stop offset="0.996" stop-color="#381a28"/><stop offset="1" stop-color="#5f1b2a"/></linearGradient>
<linearGradient id="g59" gradientUnits="userSpaceOnUse" x1="64" y1="0" x2="294" y2="0"><stop offset="0" stop-color="#6a1b2a"/><stop offset="0.00435" stop-color="#4e1a29"/><stop offset="0.0087" stop-color="#591b2a"/><stop offset="0.0391" stop-color="#621b2a"/><stop offset="0.0957" stop-color="#681b2a"/><stop offset="0.23" stop-color="#681b2a"/><stop offset="0.457" stop-color="#611b2a"/><stop offset="0.496" stop-color="#5d1b2a"/><stop offset="0.53" stop-color="#561a29"/><stop offset="0.809" stop-color="#381a28"/><stop offset="0.991" stop-color="#381a28"/><stop offset="0.996" stop-color="#3d1a28"/><stop offset="1" stop-color="#5f1b2a"/></linearGradient>
<linearGradient id="g60" gradientUnits="userSpaceOnUse" x1="64" y1="0" x2="293" y2="0"><stop offset="0" stop-color="#631b2a"/><stop offset="0.00437" stop-color="#5a1b2a"/><stop offset="0.00873" stop-color="#561a29"/><stop offset="0.0306" stop-color="#5f1b2a"/><stop offset="0.0786" stop-color="#651b2a"/><stop offset="0.183" stop-color="#681b2a"/><stop offset="0.419" stop-color="#631b2a"/><stop offset="0.489" stop-color="#5e1b2a"/><stop offset="0.537" stop-color="#551a29"/><stop offset="0.769" stop-color="#3c1a28"/><stop offset="0.808" stop-color="#381a28"/><stop offset="0.996" stop-color="#381a28"/><stop offset="1" stop-color="#5f1b2a"/></linearGradient>
<linearGradient id="g61" gradientUnits="userSpaceOnUse" x1="65" y1="0" x2="293" y2="0"><stop offset="0" stop-color="#651b2a"/><stop offset="0.00439" stop-color="#4a1a29"/><stop offset="0.00877" stop-color="#581b2a"/><stop offset="0.0482" stop-color="#611b2a"/><stop offset="0.114" stop-color="#661b2a"/><stop offset="0.272" stop-color="#661b2a"/><stop offset="0.469" stop-color="#5f1b2a"/><stop offset="0.548" stop-color="#531a29"/><stop offset="0.803" stop-color="#381a28"/><stop offset="0.996" stop-color="#381a28"/><stop offset="1" stop-color="#5f1b2a"/></linearGradient>
<linearGradient id="g62" gradientUnits="userSpaceOnUse" x1="66" y1="0" x2="292" y2="0"><stop offset="0" stop-color="#6c1b2a"/><stop offset="0.00442" stop-color="#4b1a29"/><stop offset="0.00885" stop-color="#571a29"/><stop offset="0.0442" stop-color="#601b2a"/><stop offset="0.111" stop-color="#651b2a"/><stop offset="0.265" stop-color="#661b2a"/><stop offset="0.46" stop-color="#5f1b2a"/><stop offset="0.558" stop-color="#511a29"/><stop offset="0.801" stop-color="#381a28"/><stop offset="0.996" stop-color="#381a28"/><stop offset="1" stop-color="#5f1b2a"/></linearGradient>
<linearGradient id="g63" gradientUnits="userSpaceOnUse" x1="67" y1="0" x2="292" y2="0"><stop offset="0" stop-color="#601b2a"/><stop offset="0.00444" stop-color="#4c1a29"/><stop offset="0.00889" stop-color="#561a29"/><stop offset="0.0444" stop-color="#5f1b2a"/><stop offset="0.111" stop-color="#651b2a"/><stop offset="0.267" stop-color="#651b2a"/><stop offset="0.453" stop-color="#5f1b2a"/><stop offset="0.564" stop-color="#501a29"/><stop offset="0.796" stop-color="#381a28"/><stop offset="0.996" stop-color="#381a28"/><stop offset="1" stop-color="#5f1b2a"/></linearGradient>
<linearGradient id="g64" gradientUnits="userSpaceOnUse" x1="67" y1="0" x2="291" y2="0"><stop offset="0" stop-color="#5f1b2a"/><stop offset="0.00446" stop-color="#5a1b2a"/><stop offset="0.00893" stop-color="#501a29"/><stop offset="0.0134" stop-color="#551a29"/><stop offset="0.0491" stop-color="#5e1b2a"/><stop offset="0.116" stop-color="#641b2a"/><stop offset="0.272" stop-color="#641b2a"/><stop offset="0.451" stop-color="#5f1b2a"/><stop offset="0.571" stop-color="#4f1a29"/><stop offset="0.795" stop-color="#381a28"/><stop offset="0.996" stop-color="#381a28"/><stop offset="1" stop-color="#5f1b2a"/></linearGradient>
<linearGradient id="g65" gradientUnits="userSpaceOnUse" x1="68" y1="0" x2="291" y2="0"><stop offset="0" stop-color="#681b2a"/><stop offset="0.00448" stop-color="#511a29"/><stop offset="0.00897" stop-color="#511a29"/><stop offset="0.0179" stop-color="#561a29"/><stop offset="0.0538" stop-color="#5e1b2a"/><stop offset="0.126" stop-color="#631b2a"/><stop offset="0.296" stop-color="#631b2a"/><stop offset="0.448" stop-color="#5e1b2a"/><stop offset="0.574" stop-color="#4e1a29"/><stop offset="0.785" stop-color="#381a28"/><stop offset="0.991" stop-color="#381a28"/><stop offset="0.996" stop-color="#3c1a28"/><stop offset="1" stop-color="#5f1b2a"/></linearGradient>
<linearGradient id="g66" gradientUnits="userSpaceOnUse" x1="69" y1="0" x2="290" y2="0"><stop offset="0" stop-color="#661b2a"/><stop offset="0.00452" stop-color="#4b1a29"/><stop offset="0.00905" stop-color="#511a29"/><stop offset="0.0362" stop-color="#5a1b2a"/><stop offset="0.0905" stop-color="#611b2a"/><stop offset="0.208" stop-color="#631b2a"/><stop offset="0.421" stop-color="#5f1b2a"/><stop offset="0.489" stop-color="#581b2a"/><stop offset="0.575" stop-color="#4d1a29"/><stop offset="0.783" stop-color="#381a28"/><stop offset="0.995" stop-color="#381a28"/><stop offset="1" stop-color="#5f1b2a"/></linearGradient>
<linearGradient id="g67" gradientUnits="userSpaceOnUse" x1="70" y1="0" x2="290" y2="0"><stop offset="0" stop-color="#661b2a"/><stop offset="0.00455" stop-color="#491a29"/><stop offset="0.00909" stop-color="#511a29"/><stop offset="0.0409" stop-color="#5a1b2a"/><stop offset="0.1" stop-color="#601b2a"/><stop offset="0.232" stop-color="#631b2a"/><stop offset="0.418" stop-color="#5f1b2a"/><stop offset="0.486" stop-color="#581b2a"/><stop offset="0.582" stop-color="#4b1a29"/><stop offset="0.777" stop-color="#381a28"/><stop offset="0.991" stop-color="#381a28"/><stop offset="1" stop-color="#5f1b2a"/></linearGradient>
<linearGradient id="g68" gradientUnits="userSpaceOnUse" x1="71" y1="0" x2="289" y2="0"><stop offset="0" stop-color="#651b2a"/><stop offset="0.00459" stop-color="#481a29"/><stop offset="0.00917" stop-color="#501a29"/><stop offset="0.0459" stop-color="#5a1b2a"/><stop offset="0.115" stop-color="#601b2a"/><stop offset="0.266" stop-color="#621b2a"/><stop offset="0.427" stop-color="#5d1b2a"/><stop offset="0.61" stop-color="#481a29"/><stop offset="0.775" stop-color="#381a28"/><stop offset="0.995" stop-color="#381a28"/><stop offset="1" stop-color="#5f1b2a"/></linearGradient>
<linearGradient id="g69" gradientUnits="userSpaceOnUse" x1="72" y1="0" x2="288" y2="0"><stop offset="0" stop-color="#651b2a"/><stop offset="0.00463" stop-color="#471a29"/><stop offset="0.00926" stop-color="#4f1a29"/><stop offset="0.0417" stop-color="#581b2a"/><stop offset="0.106" stop-color="#5f1b2a"/><stop offset="0.245" stop-color="#621b2a"/><stop offset="0.412" stop-color="#5e1b2a"/><stop offset="0.491" stop-color="#561a29"/><stop offset="0.602" stop-color="#491a29"/><stop offset="0.769" stop-color="#381a28"/><stop offset="0.995" stop-color="#381a28"/><stop offset="1" stop-color="#5f1b2a"/></linearGradient>
<linearGradient id="g70" gradientUnits="userSpaceOnUse" x1="73" y1="0" x2="288" y2="0"><stop offset="0" stop-color="#661b2a"/><stop offset="0.00465" stop-color="#481a29"/><stop offset="0.0093" stop-color="#4e1a29"/><stop offset="0.0326" stop-color="#561a29"/><stop offset="0.0884" stop-color="#5d1b2a"/><stop offset="0.205" stop-color="#611b2a"/><stop offset="0.386" stop-color="#5e1b2a"/><stop offset="0.47" stop-color="#581b2a"/><stop offset="0.6" stop-color="#481a29"/><stop offset="0.763" stop-color="#381a28"/><stop offset="0.991" stop-color="#381a28"/><stop offset="1" stop-color="#5f1b2a"/></linearGradient>
<linearGradient id="g71" gradientUnits="userSpaceOnUse" x1="74" y1="0" x2="287" y2="0"><stop offset="0" stop-color="#661b2a"/><stop offset="0.00469" stop-color="#491a29"/><stop offset="0.0141" stop-color="#501a29"/><stop offset="0.0516" stop-color="#581b2a"/><stop offset="0.127" stop-color="#5f1b2a"/><stop offset="0.286" stop-color="#601b2a"/><stop offset="0.423" stop-color="#5c1b2a"/><stop offset="0.634" stop-color="#441a29"/><stop offset="0.761" stop-color="#381a28"/><stop offset="0.995" stop-color="#381a28"/><stop offset="1" stop-color="#5f1b2a"/></linearGradient>
<linearGradient id="g72" gradientUnits="userSpaceOnUse" x1="75" y1="0" x2="286" y2="0"><stop offset="0" stop-color="#681b2a"/><stop offset="0.00474" stop-color="#4d1a29"/><stop offset="0.00948" stop-color="#481a29"/><stop offset="0.0142" stop-color="#4f1a29"/><stop offset="0.0521" stop-color="#581b2a"/><stop offset="0.123" stop-color="#5e1b2a"/><stop offset="0.275" stop-color="#601b2a"/><stop offset="0.412" stop-color="#5c1b2a"/><stop offset="0.749" stop-color="#381a28"/><stop offset="0.995" stop-color="#381a28"/><stop offset="1" stop-color="#5f1b2a"/></linearGradient>
<linearGradient id="g73" gradientUnits="userSpaceOnUse" x1="76" y1="0" x2="286" y2="0"><stop offset="0" stop-color="#631b2a"/><stop offset="0.00476" stop-color="#571a29"/><stop offset="0.00952" stop-color="#481a29"/><stop offset="0.0143" stop-color="#4e1a29"/><stop offset="0.0571" stop-color="#571a29"/><stop offset="0.133" stop-color="#5e1b2a"/><stop offset="0.29" stop-color="#5f1b2a"/><stop offset="0.419" stop-color="#5a1b2a"/><stop offset="0.738" stop-color="#381a28"/><stop offset="0.99" stop-color="#381a28"/><stop offset="1" stop-color="#5f1b2a"/></linearGradient>
<linearGradient id="g74" gradientUnits="userSpaceOnUse" x1="78" y1="0" x2="285" y2="0"><stop offset="0" stop-color="#5a1b2a"/><stop offset="0.00483" stop-color="#461a29"/><stop offset="0.00966" stop-color="#4d1a29"/><stop offset="0.0531" stop-color="#571a29"/><stop offset="0.13" stop-color="#5d1b2a"/><stop offset="0.285" stop-color="#5e1b2a"/><stop offset="0.415" stop-color="#5a1b2a"/><stop offset="0.734" stop-color="#381a28"/><stop offset="0.99" stop-color="#381a28"/><stop offset="1" stop-color="#5f1b2a"/></linearGradient>
<linearGradient id="g75" gradientUnits="userSpaceOnUse" x1="79" y1="0" x2="284" y2="0"><stop offset="0" stop-color="#611b2a"/><stop offset="0.00488" stop-color="#431a29"/><stop offset="0.00976" stop-color="#4d1a29"/><stop offset="0.0634" stop-color="#571a29"/><stop offset="0.151" stop-color="#5d1b2a"/><stop offset="0.312" stop-color="#5d1b2a"/><stop offset="0.429" stop-color="#581b2a"/><stop offset="0.727" stop-color="#381a28"/><stop offset="0.995" stop-color="#381a28"/><stop offset="1" stop-color="#5f1b2a"/></linearGradient>
<linearGradient id="g76" gradientUnits="userSpaceOnUse" x1="80" y1="0" x2="283" y2="0"><stop offset="0" stop-color="#5f1b2a"/><stop offset="0.00493" stop-color="#431a29"/><stop offset="0.00985" stop-color="#4a1a29"/><stop offset="0.0443" stop-color="#531a29"/><stop offset="0.113" stop-color="#5b1b2a"/><stop offset="0.246" stop-color="#5e1b2a"/><stop offset="0.389" stop-color="#5a1b2a"/><stop offset="0.502" stop-color="#4f1a29"/><stop offset="0.729" stop-color="#381a28"/><stop offset="0.995" stop-color="#381a28"/><stop offset="1" stop-color="#5f1b2a"/></linearGradient>
<linearGradient id="g77" gradientUnits="userSpaceOnUse" x1="81" y1="0" x2="282" y2="0"><stop offset="0" stop-color="#661b2a"/><stop offset="0.00498" stop-color="#481a29"/><stop offset="0.00995" stop-color="#451a29"/><stop offset="0.0149" stop-color="#4b1a29"/><stop offset="0.0547" stop-color="#541a29"/><stop offset="0.134" stop-color="#5b1b2a"/><stop offset="0.279" stop-color="#5d1b2a"/><stop offset="0.408" stop-color="#581b2a"/><stop offset="0.726" stop-color="#381a28"/><stop offset="0.995" stop-color="#381a28"/><stop offset="1" stop-color="#5f1b2a"/></linearGradient>
<linearGradient id="g78" gradientUnits="userSpaceOnUse" x1="82" y1="0" x2="282" y2="0"><stop offset="0" stop-color="#5f1b2a"/><stop offset="0.005" stop-color="#581b2a"/><stop offset="0.01" stop-color="#451a29"/><stop offset="0.015" stop-color="#4b1a29"/><stop offset="0.06" stop-color="#541a29"/><stop offset="0.14" stop-color="#5b1b2a"/><stop offset="0.285" stop-color="#5c1b2a"/><stop offset="0.41" stop-color="#571a29"/><stop offset="0.715" stop-color="#381a28"/><stop offset="0.99" stop-color="#381a28"/><stop offset="0.995" stop-color="#5f1b2a"/><stop offset="1" stop-color="#5f1b2a"/></linearGradient>
<linearGradient id="g79" gradientUnits="userSpaceOnUse" x1="84" y1="0" x2="281" y2="0"><stop offset="0" stop-color="#551a29"/><stop offset="0.00508" stop-color="#401a28"/><stop offset="0.0102" stop-color="#4b1a29"/><stop offset="0.0711" stop-color="#551a29"/><stop offset="0.168" stop-color="#5b1b2a"/><stop offset="0.315" stop-color="#5b1b2a"/><stop offset="0.431" stop-color="#541a29"/><stop offset="0.711" stop-color="#381a28"/><stop offset="0.99" stop-color="#381a28"/><stop offset="1" stop-color="#5f1b2a"/></linearGradient>
<linearGradient id="g80" gradientUnits="userSpaceOnUse" x1="85" y1="0" x2="280" y2="0"><stop offset="0" stop-color="#651b2a"/><stop offset="0.00513" stop-color="#441a29"/><stop offset="0.0103" stop-color="#431a29"/><stop offset="0.0154" stop-color="#4a1a29"/><stop offset="0.0564" stop-color="#521a29"/><stop offset="0.138" stop-color="#591b2a"/><stop offset="0.277" stop-color="#5b1b2a"/><stop offset="0.405" stop-color="#551a29"/><stop offset="0.703" stop-color="#381a28"/><stop offset="0.99" stop-color="#381a28"/><stop offset="1" stop-color="#5f1b2a"/></linearGradient>
<linearGradient id="g81" gradientUnits="userSpaceOnUse" x1="86" y1="0" x2="279" y2="0"><stop offset="0" stop-color="#5f1b2a"/><stop offset="0.00518" stop-color="#571a29"/><stop offset="0.0104" stop-color="#441a29"/><stop offset="0.0155" stop-color="#491a29"/><stop offset="0.0622" stop-color="#521a29"/><stop offset="0.145" stop-color="#591b2a"/><stop offset="0.285" stop-color="#5a1b2a"/><stop offset="0.409" stop-color="#541a29"/><stop offset="0.699" stop-color="#381a28"/><stop offset="0.99" stop-color="#381a28"/><stop offset="1" stop-color="#5f1b2a"/></linearGradient>
<linearGradient id="g82" gradientUnits="userSpaceOnUse" x1="88" y1="0" x2="278" y2="0"><stop offset="0" stop-color="#551a29"/><stop offset="0.00526" stop-color="#401a28"/><stop offset="0.0105" stop-color="#471a29"/><stop offset="0.0526" stop-color="#511a29"/><stop offset="0.132" stop-color="#581b2a"/><stop offset="0.263" stop-color="#591b2a"/><stop offset="0.395" stop-color="#541a29"/><stop offset="0.689" stop-color="#381a28"/><stop offset="0.989" stop-color="#381a28"/><stop offset="1" stop-color="#5f1b2a"/></linearGradient>
<linearGradient id="g83" gradientUnits="userSpaceOnUse" x1="89" y1="0" x2="277" y2="0"><stop offset="0" stop-color="#671b2a"/><stop offset="0.00532" stop-color="#481a29"/><stop offset="0.0106" stop-color="#431a29"/><stop offset="0.016" stop-color="#481a29"/><stop offset="0.0638" stop-color="#511a29"/><stop offset="0.149" stop-color="#571a29"/><stop offset="0.287" stop-color="#581b2a"/><stop offset="0.415" stop-color="#521a29"/><stop offset="0.686" stop-color="#381a28"/><stop offset="0.989" stop-color="#381a28"/><stop offset="0.995" stop-color="#5f1b2a"/><stop offset="1" stop-color="#5f1b2a"/></linearGradient>
<linearGradient id="g84" gradientUnits="userSpaceOnUse" x1="91" y1="0" x2="275" y2="0"><stop offset="0" stop-color="#591b2a"/><stop offset="0.00543" stop-color="#3f1a28"/><stop offset="0.0109" stop-color="#471a29"/><stop offset="0.0707" stop-color="#511a29"/><stop offset="0.163" stop-color="#571a29"/><stop offset="0.304" stop-color="#571a29"/><stop offset="0.435" stop-color="#4f1a29"/><stop offset="0.679" stop-color="#381a28"/><stop offset="0.995" stop-color="#381a28"/><stop offset="1" stop-color="#5f1b2a"/></linearGradient>
<linearGradient id="g85" gradientUnits="userSpaceOnUse" x1="92" y1="0" x2="274" y2="0"><stop offset="0" stop-color="#631b2a"/><stop offset="0.00549" stop-color="#441a29"/><stop offset="0.011" stop-color="#411a28"/><stop offset="0.0165" stop-color="#461a29"/><stop offset="0.0604" stop-color="#4f1a29"/><stop offset="0.143" stop-color="#561a29"/><stop offset="0.275" stop-color="#571a29"/><stop offset="0.407" stop-color="#511a29"/><stop offset="0.67" stop-color="#381a28"/><stop offset="0.995" stop-color="#381a28"/><stop offset="1" stop-color="#5f1b2a"/></linearGradient>
<linearGradient id="g86" gradientUnits="userSpaceOnUse" x1="94" y1="0" x2="273" y2="0"><stop offset="0" stop-color="#5a1b2a"/><stop offset="0.00559" stop-color="#3f1a28"/><stop offset="0.0112" stop-color="#461a29"/><stop offset="0.0726" stop-color="#501a29"/><stop offset="0.168" stop-color="#561a29"/><stop offset="0.307" stop-color="#551a29"/><stop offset="0.447" stop-color="#4c1a29"/><stop offset="0.665" stop-color="#381a28"/><stop offset="0.989" stop-color="#381a28"/><stop offset="1" stop-color="#5f1b2a"/></linearGradient>
<linearGradient id="g87" gradientUnits="userSpaceOnUse" x1="95" y1="0" x2="272" y2="0"><stop offset="0" stop-color="#611b2a"/><stop offset="0.00565" stop-color="#441a29"/><stop offset="0.0113" stop-color="#411a28"/><stop offset="0.0169" stop-color="#451a29"/><stop offset="0.0621" stop-color="#4e1a29"/><stop offset="0.147" stop-color="#541a29"/><stop offset="0.282" stop-color="#551a29"/><stop offset="0.424" stop-color="#4d1a29"/><stop offset="0.655" stop-color="#381a28"/><stop offset="0.989" stop-color="#381a28"/><stop offset="1" stop-color="#5f1b2a"/></linearGradient>
<linearGradient id="g88" gradientUnits="userSpaceOnUse" x1="97" y1="0" x2="271" y2="0"><stop offset="0" stop-color="#511a29"/><stop offset="0.00575" stop-color="#3e1a28"/><stop offset="0.0115" stop-color="#431a29"/><stop offset="0.0575" stop-color="#4d1a29"/><stop offset="0.144" stop-color="#531a29"/><stop offset="0.276" stop-color="#541a29"/><stop offset="0.42" stop-color="#4c1a29"/><stop offset="0.649" stop-color="#381a28"/><stop offset="0.989" stop-color="#381a28"/><stop offset="1" stop-color="#5f1b2a"/></linearGradient>
<linearGradient id="g89" gradientUnits="userSpaceOnUse" x1="98" y1="0" x2="269" y2="0"><stop offset="0" stop-color="#681b2a"/><stop offset="0.00585" stop-color="#481a29"/><stop offset="0.0117" stop-color="#401a28"/><stop offset="0.0234" stop-color="#451a29"/><stop offset="0.076" stop-color="#4d1a29"/><stop offset="0.175" stop-color="#531a29"/><stop offset="0.31" stop-color="#521a29"/><stop offset="0.462" stop-color="#481a29"/><stop offset="0.643" stop-color="#381a28"/><stop offset="0.994" stop-color="#381a28"/><stop offset="1" stop-color="#5f1b2a"/></linearGradient>
<linearGradient id="g90" gradientUnits="userSpaceOnUse" x1="100" y1="0" x2="268" y2="0"><stop offset="0" stop-color="#531a29"/><stop offset="0.00595" stop-color="#3f1a28"/><stop offset="0.0119" stop-color="#3f1a28"/><stop offset="0.0179" stop-color="#431a29"/><stop offset="0.0655" stop-color="#4c1a29"/><stop offset="0.155" stop-color="#511a29"/><stop offset="0.286" stop-color="#511a29"/><stop offset="0.435" stop-color="#491a29"/><stop offset="0.631" stop-color="#381a28"/><stop offset="0.988" stop-color="#381a28"/><stop offset="1" stop-color="#5f1b2a"/></linearGradient>
<linearGradient id="g91" gradientUnits="userSpaceOnUse" x1="102" y1="0" x2="267" y2="0"><stop offset="0" stop-color="#541a29"/><stop offset="0.00606" stop-color="#3d1a28"/><stop offset="0.0121" stop-color="#421a28"/><stop offset="0.0727" stop-color="#4c1a29"/><stop offset="0.17" stop-color="#511a29"/><stop offset="0.309" stop-color="#4f1a29"/><stop offset="0.473" stop-color="#451a29"/><stop offset="0.624" stop-color="#381a28"/><stop offset="0.988" stop-color="#381a28"/><stop offset="0.994" stop-color="#5b1b2a"/><stop offset="1" stop-color="#5f1b2a"/></linearGradient>
<linearGradient id="g92" gradientUnits="userSpaceOnUse" x1="103" y1="0" x2="265" y2="0"><stop offset="0" stop-color="#661b2a"/><stop offset="0.00617" stop-color="#461a29"/><stop offset="0.0123" stop-color="#3e1a28"/><stop offset="0.0432" stop-color="#461a29"/><stop offset="0.117" stop-color="#4e1a29"/><stop offset="0.241" stop-color="#501a29"/><stop offset="0.389" stop-color="#4a1a29"/><stop offset="0.617" stop-color="#381a28"/><stop offset="0.988" stop-color="#381a28"/><stop offset="1" stop-color="#5f1b2a"/></linearGradient>
<linearGradient id="g93" gradientUnits="userSpaceOnUse" x1="105" y1="0" x2="264" y2="0"><stop offset="0" stop-color="#521a29"/><stop offset="0.00629" stop-color="#3f1a28"/><stop offset="0.0126" stop-color="#3e1a28"/><stop offset="0.0314" stop-color="#431a29"/><stop offset="0.0943" stop-color="#4b1a29"/><stop offset="0.208" stop-color="#4f1a29"/><stop offset="0.352" stop-color="#4b1a29"/><stop offset="0.547" stop-color="#3c1a28"/><stop offset="0.604" stop-color="#381a28"/><stop offset="0.987" stop-color="#381a28"/><stop offset="1" stop-color="#5f1b2a"/></linearGradient>
<linearGradient id="g94" gradientUnits="userSpaceOnUse" x1="107" y1="0" x2="262" y2="0"><stop offset="0" stop-color="#4f1a29"/><stop offset="0.00645" stop-color="#3d1a28"/><stop offset="0.0129" stop-color="#3d1a28"/><stop offset="0.0258" stop-color="#411a28"/><stop offset="0.0839" stop-color="#491a29"/><stop offset="0.187" stop-color="#4d1a29"/><stop offset="0.329" stop-color="#4b1a29"/><stop offset="0.516" stop-color="#3e1a28"/><stop offset="0.594" stop-color="#381a28"/><stop offset="0.987" stop-color="#381a28"/><stop offset="1" stop-color="#5f1b2a"/></linearGradient>
<linearGradient id="g95" gradientUnits="userSpaceOnUse" x1="109" y1="0" x2="260" y2="0"><stop offset="0" stop-color="#4e1a29"/><stop offset="0.00662" stop-color="#3c1a28"/><stop offset="0.0464" stop-color="#441a29"/><stop offset="0.126" stop-color="#4b1a29"/><stop offset="0.252" stop-color="#4c1a29"/><stop offset="0.411" stop-color="#451a29"/><stop offset="0.583" stop-color="#381a28"/><stop offset="0.993" stop-color="#381a28"/><stop offset="1" stop-color="#5f1b2a"/></linearGradient>
<linearGradient id="g96" gradientUnits="userSpaceOnUse" x1="110" y1="0" x2="259" y2="0"><stop offset="0" stop-color="#5f1b2a"/><stop offset="0.0134" stop-color="#3b1a28"/><stop offset="0.0537" stop-color="#431a29"/><stop offset="0.134" stop-color="#491a29"/><stop offset="0.262" stop-color="#4a1a29"/><stop offset="0.423" stop-color="#431a29"/><stop offset="0.57" stop-color="#381a28"/><stop offset="0.987" stop-color="#381a28"/><stop offset="1" stop-color="#5f1b2a"/></linearGradient>
<linearGradient id="g97" gradientUnits="userSpaceOnUse" x1="112" y1="0" x2="257" y2="0"><stop offset="0" stop-color="#651b2a"/><stop offset="0.0138" stop-color="#3b1a28"/><stop offset="0.069" stop-color="#441a29"/><stop offset="0.166" stop-color="#491a29"/><stop offset="0.303" stop-color="#481a29"/><stop offset="0.483" stop-color="#3d1a28"/><stop offset="0.559" stop-color="#381a28"/><stop offset="0.986" stop-color="#381a28"/><stop offset="1" stop-color="#5f1b2a"/></linearGradient>
<linearGradient id="g98" gradientUnits="userSpaceOnUse" x1="114" y1="0" x2="255" y2="0"><stop offset="0" stop-color="#5c1b2a"/><stop offset="0.00709" stop-color="#461a29"/><stop offset="0.0142" stop-color="#3a1a28"/><stop offset="0.0709" stop-color="#421a28"/><stop offset="0.17" stop-color="#471a29"/><stop offset="0.312" stop-color="#461a29"/><stop offset="0.553" stop-color="#381a28"/><stop offset="0.986" stop-color="#381a28"/><stop offset="1" stop-color="#5f1b2a"/></linearGradient>
<linearGradient id="g99" gradientUnits="userSpaceOnUse" x1="116" y1="0" x2="253" y2="0"><stop offset="0" stop-color="#591b2a"/><stop offset="0.0073" stop-color="#4d1a29"/><stop offset="0.0146" stop-color="#3a1a28"/><stop offset="0.0949" stop-color="#431a29"/><stop offset="0.212" stop-color="#461a29"/><stop offset="0.372" stop-color="#411a28"/><stop offset="0.533" stop-color="#381a28"/><stop offset="0.985" stop-color="#381a28"/><stop offset="1" stop-color="#5f1b2a"/></linearGradient>
<linearGradient id="g100" gradientUnits="userSpaceOnUse" x1="119" y1="0" x2="252" y2="0"><stop offset="0" stop-color="#4c1a29"/><stop offset="0.00752" stop-color="#391a28"/><stop offset="0.0226" stop-color="#391a28"/><stop offset="0.0752" stop-color="#401a28"/><stop offset="0.18" stop-color="#441a29"/><stop offset="0.338" stop-color="#411a28"/><stop offset="0.511" stop-color="#381a28"/><stop offset="0.977" stop-color="#381a28"/><stop offset="0.992" stop-color="#5f1b2a"/><stop offset="1" stop-color="#5f1b2a"/></linearGradient>
<linearGradient id="g101" gradientUnits="userSpaceOnUse" x1="121" y1="0" x2="250" y2="0"><stop offset="0" stop-color="#4c1a29"/><stop offset="0.00775" stop-color="#391a28"/><stop offset="0.031" stop-color="#391a28"/><stop offset="0.093" stop-color="#401a28"/><stop offset="0.217" stop-color="#421a28"/><stop offset="0.388" stop-color="#3d1a28"/><stop offset="0.488" stop-color="#381a28"/><stop offset="0.977" stop-color="#381a28"/><stop offset="0.992" stop-color="#5f1b2a"/><stop offset="1" stop-color="#5f1b2a"/></linearGradient>
<linearGradient id="g102" gradientUnits="userSpaceOnUse" x1="123" y1="0" x2="247" y2="0"><stop offset="0" stop-color="#4b1a29"/><stop offset="0.00806" stop-color="#381a28"/><stop offset="0.0484" stop-color="#3a1a28"/><stop offset="0.137" stop-color="#401a28"/><stop offset="0.282" stop-color="#3f1a28"/><stop offset="0.468" stop-color="#381a28"/><stop offset="0.984" stop-color="#381a28"/><stop offset="1" stop-color="#5f1b2a"/></linearGradient>
<linearGradient id="g103" gradientUnits="userSpaceOnUse" x1="125" y1="0" x2="245" y2="0"><stop offset="0" stop-color="#4b1a29"/><stop offset="0.0167" stop-color="#381a28"/><stop offset="0.175" stop-color="#3e1a28"/><stop offset="0.333" stop-color="#3c1a28"/><stop offset="0.45" stop-color="#381a28"/><stop offset="0.983" stop-color="#381a28"/><stop offset="1" stop-color="#5f1b2a"/></linearGradient>
<linearGradient id="g104" gradientUnits="userSpaceOnUse" x1="128" y1="0" x2="243" y2="0"><stop offset="0" stop-color="#4b1a29"/><stop offset="0.0087" stop-color="#381a28"/><stop offset="0.217" stop-color="#3c1a28"/><stop offset="0.426" stop-color="#381a28"/><stop offset="0.983" stop-color="#381a28"/><stop offset="1" stop-color="#5f1b2a"/></linearGradient>
<linearGradient id="g105" gradientUnits="userSpaceOnUse" x1="130" y1="0" x2="241" y2="0"><stop offset="0" stop-color="#4b1a29"/><stop offset="0.00901" stop-color="#4b1a29"/><stop offset="0.018" stop-color="#381a28"/><stop offset="0.261" stop-color="#391a28"/><stop offset="0.973" stop-color="#381a28"/><stop offset="0.982" stop-color="#4b1a29"/><stop offset="0.991" stop-color="#4b1a29"/><stop offset="1" stop-color="#5f1b2a"/></linearGradient>
<linearGradient id="g106" gradientUnits="userSpaceOnUse" x1="133" y1="0" x2="238" y2="0"><stop offset="0" stop-color="#4b1a29"/><stop offset="0.00952" stop-color="#381a28"/><stop offset="0.981" stop-color="#381a28"/><stop offset="1" stop-color="#5f1b2a"/></linearGradient>
<linearGradient id="g107" gradientUnits="userSpaceOnUse" x1="136" y1="0" x2="235" y2="0"><stop offset="0" stop-color="#4b1a29"/><stop offset="0.0101" stop-color="#381a28"/><stop offset="0.98" stop-color="#381a28"/><stop offset="0.99" stop-color="#4b1a29"/><stop offset="1" stop-color="#4c1a29"/></linearGradient>
<linearGradient id="g108" gradientUnits="userSpaceOnUse" x1="139" y1="0" x2="232" y2="0"><stop offset="0" stop-color="#4b1a29"/><stop offset="0.0108" stop-color="#381a28"/><stop offset="0.978" stop-color="#381a28"/><stop offset="0.989" stop-color="#4b1a29"/><stop offset="1" stop-color="#4b1a29"/></linearGradient>
<linearGradient id="g109" gradientUnits="userSpaceOnUse" x1="142" y1="0" x2="229" y2="0"><stop offset="0" stop-color="#4b1a29"/><stop offset="0.0115" stop-color="#4b1a29"/><stop offset="0.023" stop-color="#381a28"/><stop offset="0.977" stop-color="#381a28"/><stop offset="0.989" stop-color="#4b1a29"/><stop offset="1" stop-color="#4b1a29"/></linearGradient>
<linearGradient id="g110" gradientUnits="userSpaceOnUse" x1="146" y1="0" x2="226" y2="0"><stop offset="0" stop-color="#4b1a29"/><stop offset="0.0125" stop-color="#381a28"/><stop offset="0.975" stop-color="#381a28"/><stop offset="1" stop-color="#5f1b2a"/></linearGradient>
<linearGradient id="g111" gradientUnits="userSpaceOnUse" x1="150" y1="0" x2="222" y2="0"><stop offset="0" stop-color="#4b1a29"/><stop offset="0.0139" stop-color="#381a28"/><stop offset="0.972" stop-color="#381a28"/><stop offset="0.986" stop-color="#4b1a29"/><stop offset="1" stop-color="#4b1a29"/></linearGradient>
<linearGradient id="g112" gradientUnits="userSpaceOnUse" x1="155" y1="0" x2="218" y2="0"><stop offset="0" stop-color="#4b1a29"/><stop offset="0.0159" stop-color="#381a28"/><stop offset="0.952" stop-color="#381a28"/><stop offset="0.968" stop-color="#4b1a29"/><stop offset="1" stop-color="#4b1a29"/></linearGradient>
<linearGradient id="g113" gradientUnits="userSpaceOnUse" x1="160" y1="0" x2="212" y2="0"><stop offset="0" stop-color="#4b1a29"/><stop offset="0.0192" stop-color="#381a28"/><stop offset="0.962" stop-color="#381a28"/><stop offset="0.981" stop-color="#4b1a29"/><stop offset="1" stop-color="#4b1a29"/></linearGradient>
<linearGradient id="g114" gradientUnits="userSpaceOnUse" x1="167" y1="0" x2="206" y2="0"><stop offset="0" stop-color="#4b1a29"/><stop offset="0.0256" stop-color="#381a28"/><stop offset="0.923" stop-color="#381a28"/><stop offset="0.949" stop-color="#4b1a29"/><stop offset="1" stop-color="#4b1a29"/></linearGradient>
<linearGradient id="g115" gradientUnits="userSpaceOnUse" x1="179" y1="0" x2="193" y2="0"><stop offset="0" stop-color="#4b1a29"/><stop offset="0.0714" stop-color="#4b1a29"/><stop offset="0.143" stop-color="#3c1a28"/><stop offset="0.214" stop-color="#381a28"/><stop offset="0.786" stop-color="#381a28"/><stop offset="0.857" stop-color="#471a29"/><stop offset="0.929" stop-color="#4b1a29"/><stop offset="1" stop-color="#4b1a29"/></linearGradient>
</defs>
<g shape-rendering="crispEdges">
<rect x="195" y="141" width="29" height="1" fill="url(#g0)"/>
<rect x="185" y="142" width="46" height="1" fill="url(#g0)"/>
<rect x="177" y="143" width="59" height="1" fill="url(#g1)"/>
<rect x="170" y="144" width="70" height="1" fill="url(#g1)"/>
<rect x="163" y="145" width="81" height="1" fill="url(#g2)"/>
<rect x="157" y="146" width="90" height="1" fill="url(#g2)"/>
<rect x="152" y="147" width="97" height="1" fill="url(#g3)"/>
<rect x="146" y="148" width="106" height="1" fill="url(#g3)"/>
<rect x="142" y="149" width="112" height="1" fill="url(#g4)"/>
<rect x="137" y="150" width="119" height="1" fill="url(#g4)"/>
<rect x="133" y="151" width="125" height="1" fill="url(#g5)"/>
<rect x="130" y="152" width="130" height="1" fill="url(#g5)"/>
<rect x="126" y="153" width="135" height="1" fill="url(#g6)"/>
<rect x="123" y="154" width="140" height="1" fill="url(#g6)"/>
<rect x="120" y="155" width="144" height="1" fill="url(#g7)"/>
<rect x="117" y="156" width="149" height="1" fill="url(#g7)"/>
<rect x="115" y="157" width="152" height="1" fill="url(#g8)"/>
<rect x="112" y="158" width="156" height="1" fill="url(#g8)"/>
<rect x="110" y="159" width="160" height="1" fill="url(#g9)"/>
<rect x="108" y="160" width="163" height="1" fill="url(#g9)"/>
<rect x="106" y="161" width="166" height="1" fill="url(#g10)"/>
<rect x="104" y="162" width="169" height="1" fill="url(#g10)"/>
<rect x="102" y="163" width="172" height="1" fill="url(#g11)"/>
<rect x="100" y="164" width="175" height="1" fill="url(#g11)"/>
<rect x="98" y="165" width="178" height="1" fill="url(#g12)"/>
<rect x="97" y="166" width="180" height="1" fill="url(#g12)"/>
<rect x="95" y="167" width="183" height="1" fill="url(#g13)"/>
<rect x="94" y="168" width="185" height="1" fill="url(#g13)"/>
<rect x="92" y="169" width="188" height="1" fill="url(#g14)"/>
<rect x="91" y="170" width="189" height="1" fill="url(#g14)"/>
<rect x="90" y="171" width="191" height="1" fill="url(#g15)"/>
<rect x="88" y="172" width="194" height="1" fill="url(#g15)"/>
<rect x="87" y="173" width="196" height="1" fill="url(#g16)"/>
<rect x="86" y="174" width="197" height="1" fill="url(#g16)"/>
<rect x="85" y="175" width="199" height="1" fill="url(#g17)"/>
<rect x="84" y="176" width="200" height="1" fill="url(#g17)"/>
<rect x="83" y="177" width="202" height="1" fill="url(#g18)"/>
<rect x="82" y="178" width="204" height="1" fill="url(#g18)"/>
<rect x="81" y="179" width="205" height="1" fill="url(#g19)"/>
<rect x="80" y="180" width="207" height="1" fill="url(#g19)"/>
<rect x="79" y="181" width="208" height="1" fill="url(#g20)"/>
<rect x="78" y="182" width="210" height="1" fill="url(#g20)"/>
<rect x="77" y="183" width="211" height="1" fill="url(#g21)"/>
<rect x="76" y="184" width="213" height="1" fill="url(#g21)"/>
<rect x="75" y="185" width="214" height="1" fill="url(#g22)"/>
<rect x="75" y="186" width="215" height="1" fill="url(#g22)"/>
<rect x="74" y="187" width="216" height="1" fill="url(#g23)"/>
<rect x="73" y="188" width="218" height="1" fill="url(#g23)"/>
<rect x="72" y="189" width="219" height="1" fill="url(#g24)"/>
<rect x="72" y="190" width="219" height="1" fill="url(#g24)"/>
<rect x="71" y="191" width="221" height="1" fill="url(#g25)"/>
<rect x="71" y="192" width="221" height="1" fill="url(#g25)"/>
<rect x="70" y="193" width="222" height="1" fill="url(#g26)"/>
<rect x="69" y="194" width="224" height="1" fill="url(#g26)"/>
<rect x="69" y="195" width="224" height="1" fill="url(#g27)"/>
<rect x="68" y="196" width="225" height="1" fill="url(#g27)"/>
<rect x="68" y="197" width="225" height="1" fill="url(#g28)"/>
<rect x="67" y="198" width="227" height="1" fill="url(#g28)"/>
<rect x="67" y="199" width="227" height="1" fill="url(#g29)"/>
<rect x="66" y="200" width="228" height="1" fill="url(#g29)"/>
<rect x="66" y="201" width="228" height="1" fill="url(#g30)"/>
<rect x="65" y="202" width="230" height="1" fill="url(#g30)"/>
<rect x="65" y="203" width="230" height="1" fill="url(#g31)"/>
<rect x="65" y="204" width="230" height="1" fill="url(#g31)"/>
<rect x="64" y="205" width="231" height="1" fill="url(#g32)"/>
<rect x="64" y="206" width="231" height="1" fill="url(#g32)"/>
<rect x="64" y="207" width="232" height="1" fill="url(#g33)"/>
<rect x="63" y="208" width="233" height="1" fill="url(#g33)"/>
<rect x="63" y="209" width="233" height="1" fill="url(#g34)"/>
<rect x="63" y="210" width="233" height="1" fill="url(#g34)"/>
<rect x="62" y="211" width="234" height="1" fill="url(#g35)"/>
<rect x="62" y="212" width="234" height="1" fill="url(#g35)"/>
<rect x="62" y="213" width="234" height="1" fill="url(#g36)"/>
<rect x="62" y="214" width="234" height="1" fill="url(#g36)"/>
<rect x="62" y="215" width="234" height="1" fill="url(#g37)"/>
<rect x="61" y="216" width="236" height="1" fill="url(#g37)"/>
<rect x="61" y="217" width="236" height="1" fill="url(#g38)"/>
<rect x="61" y="218" width="236" height="1" fill="url(#g38)"/>
<rect x="61" y="219" width="236" height="1" fill="url(#g39)"/>
<rect x="61" y="220" width="236" height="1" fill="url(#g39)"/>
<rect x="61" y="221" width="236" height="1" fill="url(#g40)"/>
<rect x="60" y="222" width="237" height="1" fill="url(#g40)"/>
<rect x="60" y="223" width="237" height="1" fill="url(#g41)"/>
<rect x="60" y="224" width="237" height="1" fill="url(#g41)"/>
<rect x="60" y="225" width="237" height="1" fill="url(#g42)"/>
<rect x="60" y="226" width="237" height="1" fill="url(#g42)"/>
<rect x="60" y="227" width="237" height="1" fill="url(#g43)"/>
<rect x="60" y="228" width="237" height="1" fill="url(#g43)"/>
<rect x="60" y="229" width="237" height="1" fill="url(#g44)"/>
<rect x="60" y="230" width="237" height="1" fill="url(#g44)"/>
<rect x="60" y="231" width="237" height="1" fill="url(#g45)"/>
<rect x="60" y="232" width="237" height="1" fill="url(#g45)"/>
<rect x="60" y="233" width="236" height="1" fill="url(#g46)"/>
<rect x="60" y="234" width="236" height="1" fill="url(#g46)"/>
<rect x="60" y="235" width="236" height="1" fill="url(#g47)"/>
<rect x="60" y="236" width="236" height="1" fill="url(#g47)"/>
<rect x="60" y="237" width="236" height="1" fill="url(#g48)"/>
<rect x="60" y="238" width="236" height="1" fill="url(#g48)"/>
<rect x="60" y="239" width="236" height="1" fill="url(#g49)"/>
<rect x="61" y="240" width="235" height="1" fill="url(#g49)"/>
<rect x="61" y="241" width="235" height="1" fill="url(#g50)"/>
<rect x="61" y="242" width="235" height="1" fill="url(#g50)"/>
<rect x="61" y="243" width="235" height="1" fill="url(#g51)"/>
<rect x="61" y="244" width="234" height="1" fill="url(#g51)"/>
<rect x="61" y="245" width="234" height="1" fill="url(#g52)"/>
<rect x="61" y="246" width="234" height="1" fill="url(#g52)"/>
<rect x="62" y="247" width="233" height="1" fill="url(#g53)"/>
<rect x="62" y="248" width="233" height="1" fill="url(#g53)"/>
<rect x="62" y="249" width="233" height="1" fill="url(#g54)"/>
<rect x="62" y="250" width="233" height="1" fill="url(#g54)"/>
<rect x="63" y="251" width="231" height="1" fill="url(#g55)"/>
<rect x="63" y="252" width="231" height="1" fill="url(#g55)"/>
<rect x="63" y="253" width="231" height="1" fill="url(#g56)"/>
<rect x="63" y="254" width="231" height="1" fill="url(#g56)"/>
<rect x="64" y="255" width="230" height="1" fill="url(#g57)"/>
<rect x="64" y="256" width="229" height="1" fill="url(#g57)"/>
<rect x="64" y="257" width="229" height="1" fill="url(#g58)"/>
<rect x="64" y="258" width="229" height="1" fill="url(#g58)"/>
<rect x="65" y="259" width="228" height="1" fill="url(#g59)"/>
<rect x="65" y="260" width="228" height="1" fill="url(#g59)"/>
<rect x="65" y="261" width="227" height="1" fill="url(#g60)"/>
<rect x="66" y="262" width="226" height="1" fill="url(#g60)"/>
<rect x="66" y="263" width="226" height="1" fill="url(#g61)"/>
<rect x="67" y="264" width="225" height="1" fill="url(#g61)"/>
<rect x="67" y="265" width="224" height="1" fill="url(#g62)"/>
<rect x="67" y="266" width="224" height="1" fill="url(#g62)"/>
<rect x="68" y="267" width="223" height="1" fill="url(#g63)"/>
<rect x="68" y="268" width="223" height="1" fill="url(#g63)"/>
<rect x="68" y="269" width="222" height="1" fill="url(#g64)"/>
<rect x="69" y="270" width="221" height="1" fill="url(#g64)"/>
<rect x="69" y="271" width="221" height="1" fill="url(#g65)"/>
<rect x="70" y="272" width="220" height="1" fill="url(#g65)"/>
<rect x="70" y="273" width="219" height="1" fill="url(#g66)"/>
<rect x="71" y="274" width="218" height="1" fill="url(#g66)"/>
<rect x="71" y="275" width="218" height="1" fill="url(#g67)"/>
<rect x="72" y="276" width="216" height="1" fill="url(#g67)"/>
<rect x="72" y="277" width="216" height="1" fill="url(#g68)"/>
<rect x="73" y="278" width="215" height="1" fill="url(#g68)"/>
<rect x="73" y="279" width="214" height="1" fill="url(#g69)"/>
<rect x="74" y="280" width="213" height="1" fill="url(#g69)"/>
<rect x="74" y="281" width="213" height="1" fill="url(#g70)"/>
<rect x="75" y="282" width="211" height="1" fill="url(#g70)"/>
<rect x="75" y="283" width="211" height="1" fill="url(#g71)"/>
<rect x="76" y="284" width="210" height="1" fill="url(#g71)"/>
<rect x="76" y="285" width="209" height="1" fill="url(#g72)"/>
<rect x="77" y="286" width="208" height="1" fill="url(#g72)"/>
<rect x="77" y="287" width="208" height="1" fill="url(#g73)"/>
<rect x="78" y="288" width="206" height="1" fill="url(#g73)"/>
<rect x="79" y="289" width="205" height="1" fill="url(#g74)"/>
<rect x="79" y="290" width="205" height="1" fill="url(#g74)"/>
<rect x="80" y="291" width="203" height="1" fill="url(#g75)"/>
<rect x="80" y="292" width="203" height="1" fill="url(#g75)"/>
<rect x="81" y="293" width="201" height="1" fill="url(#g76)"/>
<rect x="82" y="294" width="200" height="1" fill="url(#g76)"/>
<rect x="82" y="295" width="199" height="1" fill="url(#g77)"/>
<rect x="83" y="296" width="198" height="1" fill="url(#g77)"/>
<rect x="83" y="297" width="198" height="1" fill="url(#g78)"/>
<rect x="84" y="298" width="196" height="1" fill="url(#g78)"/>
<rect x="85" y="299" width="195" height="1" fill="url(#g79)"/>
<rect x="85" y="300" width="194" height="1" fill="url(#g79)"/>
<rect x="86" y="301" width="193" height="1" fill="url(#g80)"/>
<rect x="87" y="302" width="191" height="1" fill="url(#g80)"/>
<rect x="87" y="303" width="191" height="1" fill="url(#g81)"/>
<rect x="88" y="304" width="189" height="1" fill="url(#g81)"/>
<rect x="89" y="305" width="188" height="1" fill="url(#g82)"/>
<rect x="90" y="306" width="186" height="1" fill="url(#g82)"/>
<rect x="90" y="307" width="186" height="1" fill="url(#g83)"/>
<rect x="91" y="308" width="184" height="1" fill="url(#g83)"/>
<rect x="92" y="309" width="182" height="1" fill="url(#g84)"/>
<rect x="92" y="310" width="182" height="1" fill="url(#g84)"/>
<rect x="93" y="311" width="180" height="1" fill="url(#g85)"/>
<rect x="94" y="312" width="179" height="1" fill="url(#g85)"/>
<rect x="95" y="313" width="177" height="1" fill="url(#g86)"/>
<rect x="95" y="314" width="177" height="1" fill="url(#g86)"/>
<rect x="96" y="315" width="175" height="1" fill="url(#g87)"/>
<rect x="97" y="316" width="173" height="1" fill="url(#g87)"/>
<rect x="98" y="317" width="172" height="1" fill="url(#g88)"/>
<rect x="99" y="318" width="170" height="1" fill="url(#g88)"/>
<rect x="99" y="319" width="169" height="1" fill="url(#g89)"/>
<rect x="100" y="320" width="168" height="1" fill="url(#g89)"/>
<rect x="101" y="321" width="166" height="1" fill="url(#g90)"/>
<rect x="102" y="322" width="164" height="1" fill="url(#g90)"/>
<rect x="103" y="323" width="163" height="1" fill="url(#g91)"/>
<rect x="103" y="324" width="162" height="1" fill="url(#g91)"/>
<rect x="104" y="325" width="160" height="1" fill="url(#g92)"/>
<rect x="105" y="326" width="158" height="1" fill="url(#g92)"/>
<rect x="106" y="327" width="157" height="1" fill="url(#g93)"/>
<rect x="107" y="328" width="155" height="1" fill="url(#g93)"/>
<rect x="108" y="329" width="153" height="1" fill="url(#g94)"/>
<rect x="109" y="330" width="151" height="1" fill="url(#g94)"/>
<rect x="110" y="331" width="149" height="1" fill="url(#g95)"/>
<rect x="111" y="332" width="148" height="1" fill="url(#g95)"/>
<rect x="111" y="333" width="147" height="1" fill="url(#g96)"/>
<rect x="112" y="334" width="145" height="1" fill="url(#g96)"/>
<rect x="113" y="335" width="143" height="1" fill="url(#g97)"/>
<rect x="114" y="336" width="141" height="1" fill="url(#g97)"/>
<rect x="115" y="337" width="139" height="1" fill="url(#g98)"/>
<rect x="116" y="338" width="137" height="1" fill="url(#g98)"/>
<rect x="117" y="339" width="135" height="1" fill="url(#g99)"/>
<rect x="118" y="340" width="134" height="1" fill="url(#g99)"/>
<rect x="120" y="341" width="131" height="1" fill="url(#g100)"/>
<rect x="121" y="342" width="129" height="1" fill="url(#g100)"/>
<rect x="122" y="343" width="127" height="1" fill="url(#g101)"/>
<rect x="123" y="344" width="125" height="1" fill="url(#g101)"/>
<rect x="124" y="345" width="122" height="1" fill="url(#g102)"/>
<rect x="125" y="346" width="120" height="1" fill="url(#g102)"/>
<rect x="126" y="347" width="118" height="1" fill="url(#g103)"/>
<rect x="128" y="348" width="115" height="1" fill="url(#g103)"/>
<rect x="129" y="349" width="113" height="1" fill="url(#g104)"/>
<rect x="130" y="350" width="111" height="1" fill="url(#g104)"/>
<rect x="131" y="351" width="109" height="1" fill="url(#g105)"/>
<rect x="133" y="352" width="105" height="1" fill="url(#g105)"/>
<rect x="134" y="353" width="103" height="1" fill="url(#g106)"/>
<rect x="136" y="354" width="100" height="1" fill="url(#g106)"/>
<rect x="137" y="355" width="97" height="1" fill="url(#g107)"/>
<rect x="139" y="356" width="94" height="1" fill="url(#g107)"/>
<rect x="140" y="357" width="91" height="1" fill="url(#g108)"/>
<rect x="142" y="358" width="88" height="1" fill="url(#g108)"/>
<rect x="143" y="359" width="85" height="1" fill="url(#g109)"/>
<rect x="145" y="360" width="82" height="1" fill="url(#g109)"/>
<rect x="147" y="361" width="78" height="1" fill="url(#g110)"/>
<rect x="149" y="362" width="74" height="1" fill="url(#g110)"/>
<rect x="151" y="363" width="70" height="1" fill="url(#g111)"/>
<rect x="153" y="364" width="66" height="1" fill="url(#g111)"/>
<rect x="156" y="365" width="61" height="1" fill="url(#g112)"/>
<rect x="158" y="366" width="56" height="1" fill="url(#g112)"/>
<rect x="161" y="367" width="50" height="1" fill="url(#g113)"/>
<rect x="164" y="368" width="44" height="1" fill="url(#g113)"/>
<rect x="168" y="369" width="37" height="1" fill="url(#g114)"/>
<rect x="173" y="370" width="27" height="1" fill="url(#g114)"/>
<rect x="180" y="371" width="12" height="1" fill="url(#g115)"/>
</g>
<rect x="90" y="180" width="64" height="64" fill="url(#halo)"/>
<rect x="105" y="175" width="80" height="76" fill="url(#spec)"/>
<g shape-rendering="crispEdges">
<circle cx="197.2" cy="272" r="19" fill="url(#h4)"/>
<rect x="0" y="-2.2" width="48" height="4.4" transform="translate(125 226.300) rotate(26)" fill="url(#b1)"/>
<rect x="0" y="-2.3" width="40" height="4.6" transform="translate(224 215) rotate(137.500)" fill="url(#b2)"/>
<circle cx="119.2" cy="223.2" r="19.3" fill="url(#h1)"/>
<circle cx="233" cy="205.700" r="19.1" fill="url(#h2)"/>
<circle cx="186.700" cy="310.100" r="19.2" fill="url(#h2)"/>
<circle cx="183.900" cy="252.500" r="26.8" fill="url(#cc)"/>
<rect x="183" y="273" width="5" height="18.5" fill="url(#b3v)"/>
</g>
<rect x="165" y="236" width="22" height="16" fill="url(#chl)"/>
</svg>
</div>
<div class="t" style="left:23px;top:481px">MO ( (MO = 2) ; Isovalue = 0.02 )</div>
<div class="list"></div>
<div class="rows">
<div class="num" style="top:16px">15</div><div class="ln" style="top:23px"></div><div class="bx" style="top:10px"></div><div class="en" style="top:16px">0.87437</div><div class="sq" style="top:18px"></div>
<div class="num" style="top:47px">14</div><div class="ln" style="top:54px"></div><div class="bx" style="top:41px"></div><div class="en" style="top:47px">0.87437</div><div class="sq" style="top:49px"></div>
<div class="num" style="top:78px">13</div><div class="ln" style="top:85px"></div><div class="bx" style="top:72px"></div><div class="en" style="top:78px">0.87437</div><div class="sq" style="top:80px"></div>
<div class="num" style="top:109px">12</div><div class="ln" style="top:116px"></div><div class="bx" style="top:103px"></div><div class="en" style="top:109px">0.52915</div><div class="sq" style="top:111px"></div>
<div class="num" style="top:140px">11</div><div class="ln" style="top:147px"></div><div class="bx" style="top:134px"></div><div class="en" style="top:140px">0.52915</div><div class="sq" style="top:142px"></div>
<div class="num" style="top:171px">10</div><div class="ln" style="top:178px"></div><div class="bx" style="top:165px"></div><div class="en" style="top:171px">0.52915</div><div class="sq" style="top:173px"></div>
<div class="num" style="top:202px">9</div><div class="ln" style="top:209px"></div><div class="bx" style="top:196px"></div><div class="en" style="top:202px">0.17677</div><div class="sq" style="top:204px"></div>
<div class="num" style="top:233px">8</div><div class="ln" style="top:240px"></div><div class="bx" style="top:227px"></div><div class="en" style="top:233px">0.17677</div><div class="sq" style="top:235px"></div>
<div class="num" style="top:264px">7</div><div class="ln" style="top:271px"></div><div class="bx" style="top:258px"></div><div class="en" style="top:264px">0.17677</div><div class="sq" style="top:266px"></div>
<div class="hl" style="top:288px"></div><div class="num" style="top:295px">6</div><div class="ln" style="top:302px"></div><div class="bx" style="top:289px"></div><div class="en" style="top:295px">0.11824</div><div class="sq" style="top:297px"></div>
<div class="hl" style="top:319px"></div><div class="num" style="top:326px">5</div><div class="ln" style="top:333px"></div><div class="bx" style="top:320px"><svg width="23" height="23" viewBox="0 0 23 23" shape-rendering="crispEdges"><path d="M7 3h1v17h-1z M7 3 L7 9 L3 10 Z" fill="#f00"/><path d="M15 3h1v17h-1z M16 20 L16 14 L20 13 Z" fill="#f00"/></svg></div><div class="en" style="top:326px"><span class="m">-</span>0.38831</div><div class="sq" style="top:328px"></div>
<div class="num" style="top:357px">4</div><div class="ln" style="top:364px"></div><div class="bx" style="top:351px"><svg width="23" height="23" viewBox="0 0 23 23" shape-rendering="crispEdges"><path d="M7 3h1v17h-1z M7 3 L7 9 L3 10 Z" fill="#f00"/><path d="M15 3h1v17h-1z M16 20 L16 14 L20 13 Z" fill="#f00"/></svg></div><div class="en" style="top:357px"><span class="m">-</span>0.38831</div><div class="sq" style="top:359px"></div>
<div class="num" style="top:388px">3</div><div class="ln" style="top:395px"></div><div class="bx" style="top:382px"><svg width="23" height="23" viewBox="0 0 23 23" shape-rendering="crispEdges"><path d="M7 3h1v17h-1z M7 3 L7 9 L3 10 Z" fill="#f00"/><path d="M15 3h1v17h-1z M16 20 L16 14 L20 13 Z" fill="#f00"/></svg></div><div class="en" style="top:388px"><span class="m">-</span>0.38831</div><div class="sq" style="top:390px"></div>
<div class="hl" style="top:412px"></div><div class="num" style="top:419px">2</div><div class="ln" style="top:426px"></div><div class="bx" style="top:413px"><svg width="23" height="23" viewBox="0 0 23 23" shape-rendering="crispEdges"><path d="M7 3h1v17h-1z M7 3 L7 9 L3 10 Z" fill="#f00"/><path d="M15 3h1v17h-1z M16 20 L16 14 L20 13 Z" fill="#f00"/></svg></div><div class="en" style="top:419px"><span class="m">-</span>0.69041</div><div class="sq r" style="top:421px"></div>
<div class="num" style="top:450px">1</div><div class="ln" style="top:457px"></div><div class="bx" style="top:444px"><svg width="23" height="23" viewBox="0 0 23 23" shape-rendering="crispEdges"><path d="M7 3h1v17h-1z M7 3 L7 9 L3 10 Z" fill="#f00"/><path d="M15 3h1v17h-1z M16 20 L16 14 L20 13 Z" fill="#f00"/></svg></div><div class="en" style="top:450px"><span class="m">-</span>10.16707</div><div class="sq" style="top:452px"></div>
<div class="dots"></div>
</div>
<div class="sb"></div>
<svg style="left:582px;top:13px" width="10" height="7" viewBox="0 0 10 7"><defs><linearGradient id="ag" x1="0" y1="0" x2="1" y2="1"><stop offset="0" stop-color="#000"/><stop offset="1" stop-color="#a0a0a0"/></linearGradient></defs><path d="M1 5 L4.500 1 L8 5 Z" fill="url(#ag)"/></svg>
<svg style="left:582px;top:499px" width="10" height="7" viewBox="0 0 10 7"><path d="M1 1 L8 1 L4.500 5 Z" fill="url(#ag)"/></svg>
<div class="thumb"></div>
<div class="grip" style="top:389px"></div><div class="grip" style="top:392px"></div><div class="grip" style="top:395px"></div>
</body></html>
